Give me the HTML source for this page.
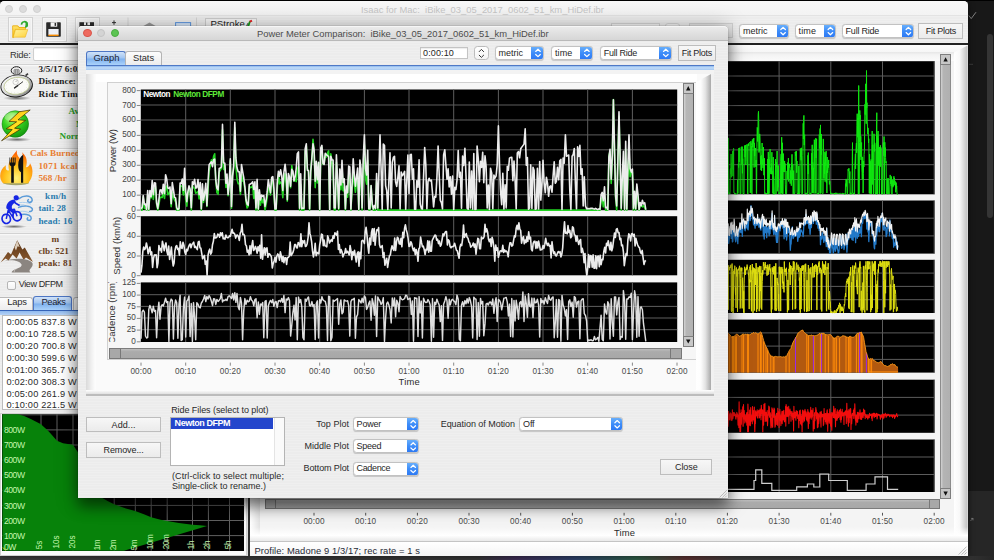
<!DOCTYPE html>
<html lang="en"><head><meta charset="utf-8"><title>Isaac for Mac</title>
<style>
*{box-sizing:border-box;margin:0;padding:0}
html,body{width:994px;height:560px;overflow:hidden}
body{position:relative;background:#1b1b1b;font-family:"Liberation Sans",sans-serif;font-size:9px;color:#222}
.a{position:absolute}
.t{position:absolute;white-space:pre;line-height:1;display:block}
svg{position:absolute;left:0;top:0;overflow:visible}
.pin{background-image:repeating-linear-gradient(180deg,rgba(255,255,255,.16) 0,rgba(255,255,255,.16) 1px,rgba(0,0,0,0) 1px,rgba(0,0,0,0) 2.64px)}
.sel{position:absolute;background:#fff;border:1px solid #c2c2c2;border-radius:3.6px;overflow:hidden;box-shadow:0 .5px .8px rgba(0,0,0,.16)}
.sel i{position:absolute;right:-1px;top:-1px;bottom:-1px;width:12px;background:linear-gradient(180deg,#6fb4fb 0,#3e8df9 50%,#2a76f3 100%);border-radius:0 3.6px 3.6px 0}
.btn{position:absolute;background:linear-gradient(180deg,#f7f7f7,#ebebeb);border:1px solid #bdbdbd}

</style></head>
<body>
<div class="a" style="left:967.00px;top:0.00px;width:27.00px;height:560.00px;background:#181818"></div>
<div class="a" style="left:967.00px;top:491.00px;width:27.00px;height:69.00px;background:#262626"></div>
<div class="a" style="left:987.00px;top:34.30px;width:6.00px;height:184.00px;background:#353535;border-radius:3px"></div>
<svg width="994" height="560"><path d="M968.8 15.5 L971.2 18.6 L976 12.2" fill="none" stroke="#8e8e8e" stroke-width="0.9"/><path d="M969 64.3 H973" stroke="#444" stroke-width="0.8"/><path d="M970.4 521 l2.6 -2.6 m0 0 h-2 m2 0 v2" stroke="#999" stroke-width="0.6" fill="none"/></svg>
<div class="a" style="left:0.00px;top:556.20px;width:994.00px;height:3.80px;background:linear-gradient(90deg,#3a3a3a 0,#343434 48%,#3c2c54 52%,#2c4068 58%,#2c5a44 64%,#5a3030 69%,#3a3a3a 74%,#343434 97%,#262626 100%)"></div>
<div class="a" style="left:0.00px;top:0.00px;width:994.00px;height:1.20px;background:#000"></div>
<div class="a" style="left:0.00px;top:1.00px;width:967.60px;height:555.20px;background:#ececec;border-radius:4.5px 4.5px 0 0;box-shadow:0 0 6px rgba(0,0,0,.6)"></div>
<div class="a" style="left:0.00px;top:1.00px;width:967.60px;height:14.80px;background:linear-gradient(180deg,#f8f8f8,#f3f3f3);border-radius:4.5px 4.5px 0 0;border-bottom:1px solid #e3e3e3"></div>
<div class="a" style="left:4.80px;top:4.70px;width:8.40px;height:8.40px;border-radius:50%;background:#dcdcdc;border:.6px solid #d0d0d0"></div>
<div class="a" style="left:18.60px;top:4.70px;width:8.40px;height:8.40px;border-radius:50%;background:#dcdcdc;border:.6px solid #d0d0d0"></div>
<div class="a" style="left:32.50px;top:4.70px;width:8.40px;height:8.40px;border-radius:50%;background:#dcdcdc;border:.6px solid #d0d0d0"></div>
<span class="t" style="left:361.00px;top:5.09px;font-size:9.4px;color:#c6c6c6;">Isaac for Mac:  iBike_03_05_2017_0602_51_km_HiDef.ibr</span>
<div class="a" style="left:0.00px;top:15.80px;width:967.60px;height:27.70px;background:#ececec"><div class="a pin" style="inset:0"></div></div>
<div class="a" style="left:7.60px;top:17.00px;width:25.00px;height:25.20px;border:1px solid #d2d2d2;background:linear-gradient(180deg,#f1f1f1,#e9e9e9);box-shadow:inset 0 0 0 1px #f6f6f6"></div>
<div class="a" style="left:41.50px;top:17.00px;width:25.00px;height:25.20px;border:1px solid #d2d2d2;background:linear-gradient(180deg,#f1f1f1,#e9e9e9);box-shadow:inset 0 0 0 1px #f6f6f6"></div>
<div class="a" style="left:74.60px;top:17.00px;width:25.00px;height:25.20px;border:1px solid #d2d2d2;background:linear-gradient(180deg,#f1f1f1,#e9e9e9);box-shadow:inset 0 0 0 1px #f6f6f6"></div>
<svg width="994" height="560">
<defs><linearGradient id="fg" x1="0" y1="0" x2="0" y2="1"><stop offset="0" stop-color="#ffe36a"/><stop offset="1" stop-color="#f4b400"/></linearGradient>
<linearGradient id="ff" x1="0" y1="0" x2="1" y2="1"><stop offset="0" stop-color="#fff3a0"/><stop offset="1" stop-color="#ffd23c"/></linearGradient></defs>
<path d="M12.6 25.6 h5.2 l1.4 1.5 h6.6 v3 h-13.2z" fill="#f2b100"/>
<path d="M12.6 26 v11.6 h1.2 l1.6 -8.2 h10 v-1.8 h-6.4 l-1.4 -1.6z" fill="url(#fg)" stroke="#e0a000" stroke-width=".5"/>
<path d="M15.6 29.6 h12.2 l-2.6 7.6 h-12z" fill="url(#ff)" stroke="#e8ac10" stroke-width=".5"/>
<path d="M21.6 24.6 a2.8 2.8 0 1 1 3.6 2.6" fill="none" stroke="#2fa82f" stroke-width="1.7"/>
<path d="M25.6 22.2 l2.2 0.4 -0.2 3.8 -2.2 -0.2z" fill="#2fa82f"/>
<!-- floppy -->
<rect x="46.2" y="22.3" width="14.6" height="14.4" rx=".8" fill="#2b2b2b"/>
<rect x="50.6" y="22.3" width="6.6" height="4.4" fill="#f4f4f4"/>
<rect x="54.6" y="22.9" width="1.5" height="3" fill="#2b2b2b"/>
<rect x="48.4" y="29" width="10.2" height="6" fill="#eef1f8"/>
<rect x="48.4" y="34.6" width="10.2" height="1.4" fill="#f58a00"/>
<!-- 3rd button icon top (mostly hidden) -->
<rect x="79.4" y="22.2" width="14.6" height="9" fill="#2b2b2b"/><rect x="84" y="22.2" width="6" height="3" fill="#f4f4f4"/><rect x="86" y="22.6" width="1.4" height="2.4" fill="#2b2b2b"/>
<path d="M114 20.4 v4.4 M112 22.6 h4" stroke="#333" stroke-width="1"/>
<path d="M128 17.5 v24" stroke="#d6d6d6" stroke-width="1"/>
<path d="M142.5 26.5 L149.5 22.6 L156.5 26.5z" fill="#9a9a9a"/>
<rect x="175.6" y="22.6" width="15" height="8" fill="#d8e8fb" stroke="#5b97e0" stroke-width="1"/>
<path d="M196.5 17.5 v24" stroke="#d6d6d6" stroke-width="1"/>
</svg>
<div class="a" style="left:204.60px;top:17.50px;width:52.80px;height:24.60px;border:1px solid #cdcdcd;background:linear-gradient(180deg,#f4f4f4,#e9e9e9)"></div>
<span class="t" style="left:210.40px;top:18.80px;font-size:9.6px;color:#222;letter-spacing:0.051px;">PStroke</span>
<svg width="994" height="560"><path d="M247 26.4 l2.2 -5.4 1.6 .6 -1.6 4.8z" fill="#18a018"/><path d="M249.2 20.8 l2.4 -1 .8 1.6 -2 1.2z" fill="#e02020"/><path d="M246.4 26.6 l1.4 -3.4" stroke="#222" stroke-width=".8"/></svg>
<div class="a" style="left:611.00px;top:23.20px;width:48.60px;height:15.00px;background:#f6f6f6;border:1px solid #d4d4d4"></div>
<div class="a" style="left:665.00px;top:23.20px;width:14.70px;height:15.00px;background:#f4f4f4;border:1px solid #d4d4d4;border-radius:3px"></div>
<div class="a" style="left:689.40px;top:23.20px;width:43.90px;height:15.00px;background:#e6e6e6;border:1px solid #d0d0d0"></div>
<div class="sel" style="left:739.30px;top:23.60px;width:49.80px;height:14.90px"><i style="width:12.60px"></i></div>
<svg width="994" height="560"><path d="M780.80 29.55 L783.10 27.35 L785.40 29.55 M780.80 32.55 L783.10 34.75 L785.40 32.55" fill="none" stroke="#fff" stroke-width="1.2" stroke-linecap="round" stroke-linejoin="round"/></svg>
<span class="t" style="left:742.90px;top:27.24px;font-size:9px;color:#262626;">metric</span>
<div class="sel" style="left:795.00px;top:23.60px;width:41.40px;height:14.90px"><i style="width:12.60px"></i></div>
<svg width="994" height="560"><path d="M828.10 29.55 L830.40 27.35 L832.70 29.55 M828.10 32.55 L830.40 34.75 L832.70 32.55" fill="none" stroke="#fff" stroke-width="1.2" stroke-linecap="round" stroke-linejoin="round"/></svg>
<span class="t" style="left:798.60px;top:27.24px;font-size:9px;color:#262626;letter-spacing:0.121px;">time</span>
<div class="sel" style="left:842.00px;top:23.60px;width:72.40px;height:14.90px"><i style="width:12.60px"></i></div>
<svg width="994" height="560"><path d="M906.10 29.55 L908.40 27.35 L910.70 29.55 M906.10 32.55 L908.40 34.75 L910.70 32.55" fill="none" stroke="#fff" stroke-width="1.2" stroke-linecap="round" stroke-linejoin="round"/></svg>
<span class="t" style="left:845.60px;top:27.24px;font-size:9px;color:#262626;letter-spacing:-0.235px;">Full Ride</span>
<div class="btn" style="left:918.30px;top:23.10px;width:45.20px;height:15.50px"></div>
<span class="t" style="left:925.65px;top:27.04px;font-size:9px;color:#262626;letter-spacing:-0.224px;">Fit Plots</span>
<div class="a" style="left:0.00px;top:43.40px;width:967.60px;height:2.00px;background:#232323"></div>
<div class="a" style="left:0.00px;top:45.40px;width:248.00px;height:510.80px;background:#ececec"><div class="a pin" style="inset:0"></div></div>
<span class="t" style="left:10.00px;top:49.59px;font-size:9.4px;color:#333;letter-spacing:-0.278px;">Ride:</span>
<div class="a" style="left:33.00px;top:47.00px;width:120.00px;height:13.60px;background:#fff;border:1px solid #cfcfcf;border-radius:2px;box-shadow:inset 0 1px 1px rgba(0,0,0,.08)"></div>
<div class="a" style="left:0.00px;top:63.60px;width:248.00px;height:1.00px;background:#d2d2d2"></div>
<div class="a" style="left:0.00px;top:64.60px;width:248.00px;height:1.00px;background:#f8f8f8"></div>
<div class="a" style="left:0.00px;top:105.40px;width:248.00px;height:1.00px;background:#d2d2d2"></div>
<div class="a" style="left:0.00px;top:106.40px;width:248.00px;height:1.00px;background:#f8f8f8"></div>
<div class="a" style="left:0.00px;top:147.50px;width:248.00px;height:1.00px;background:#d2d2d2"></div>
<div class="a" style="left:0.00px;top:148.50px;width:248.00px;height:1.00px;background:#f8f8f8"></div>
<div class="a" style="left:0.00px;top:188.80px;width:248.00px;height:1.00px;background:#d2d2d2"></div>
<div class="a" style="left:0.00px;top:189.80px;width:248.00px;height:1.00px;background:#f8f8f8"></div>
<div class="a" style="left:0.00px;top:232.50px;width:248.00px;height:1.00px;background:#d2d2d2"></div>
<div class="a" style="left:0.00px;top:233.50px;width:248.00px;height:1.00px;background:#f8f8f8"></div>
<div class="a" style="left:0.00px;top:274.20px;width:248.00px;height:1.00px;background:#d2d2d2"></div>
<div class="a" style="left:0.00px;top:275.20px;width:248.00px;height:1.00px;background:#f8f8f8"></div>
<span class="t" style="left:38.50px;top:64.79px;font-size:9.2px;color:#1c1c1c;font-family:'Liberation Serif', serif;font-weight:bold;letter-spacing:0.080px;">3/5/17 6:02</span>
<span class="t" style="left:38.50px;top:77.09px;font-size:9.2px;color:#1c1c1c;font-family:'Liberation Serif', serif;font-weight:bold;letter-spacing:0.083px;">Distance:</span>
<span class="t" style="left:38.50px;top:89.59px;font-size:9.2px;color:#1c1c1c;font-family:'Liberation Serif', serif;font-weight:bold;letter-spacing:0.369px;">Ride Time:</span>
<span class="t" style="left:68.50px;top:107.49px;font-size:9.2px;color:#2aa02a;font-family:'Liberation Serif', serif;font-weight:bold;">Avg</span>
<span class="t" style="left:76.00px;top:119.79px;font-size:9.2px;color:#2aa02a;font-family:'Liberation Serif', serif;font-weight:bold;">Max</span>
<span class="t" style="left:59.50px;top:132.09px;font-size:9.2px;color:#2aa02a;font-family:'Liberation Serif', serif;font-weight:bold;">Norm</span>
<span class="t" style="left:30.00px;top:149.39px;font-size:9.2px;color:#ea7f33;font-family:'Liberation Serif', serif;font-weight:bold;letter-spacing:0.065px;">Cals Burned</span>
<span class="t" style="left:38.40px;top:161.69px;font-size:9.2px;color:#ea7f33;font-family:'Liberation Serif', serif;font-weight:bold;letter-spacing:0.276px;">1071 kcal</span>
<span class="t" style="left:38.40px;top:174.09px;font-size:9.2px;color:#ea7f33;font-family:'Liberation Serif', serif;font-weight:bold;letter-spacing:0.096px;">568 /hr</span>
<span class="t" style="left:45.00px;top:191.89px;font-size:9.2px;color:#2b7db0;font-family:'Liberation Serif', serif;font-weight:bold;letter-spacing:0.266px;">km/h</span>
<span class="t" style="left:38.40px;top:204.19px;font-size:9.2px;color:#2b7db0;font-family:'Liberation Serif', serif;font-weight:bold;letter-spacing:0.023px;">tail: 28</span>
<span class="t" style="left:38.40px;top:216.69px;font-size:9.2px;color:#2b7db0;font-family:'Liberation Serif', serif;font-weight:bold;letter-spacing:0.070px;">head: 16</span>
<span class="t" style="left:51.60px;top:234.89px;font-size:9.2px;color:#6a3f1d;font-family:'Liberation Serif', serif;font-weight:bold;">m</span>
<span class="t" style="left:38.40px;top:246.89px;font-size:9.2px;color:#6a3f1d;font-family:'Liberation Serif', serif;font-weight:bold;letter-spacing:-0.049px;">clb: 521</span>
<span class="t" style="left:38.40px;top:259.29px;font-size:9.2px;color:#6a3f1d;font-family:'Liberation Serif', serif;font-weight:bold;letter-spacing:0.070px;">peak: 81</span>
<svg width="994" height="560">
<defs>
<radialGradient id="sw" cx=".45" cy=".4" r=".7"><stop offset="0" stop-color="#ffffff"/><stop offset=".75" stop-color="#f1f1ea"/><stop offset="1" stop-color="#c9c9c0"/></radialGradient>
<linearGradient id="swr" x1="0" y1="0" x2="1" y2="1"><stop offset="0" stop-color="#ffffff"/><stop offset=".45" stop-color="#d8d8d8"/><stop offset=".8" stop-color="#9a9a9a"/><stop offset="1" stop-color="#5c5c5c"/></linearGradient>
<radialGradient id="gb" cx=".4" cy=".3" r=".8"><stop offset="0" stop-color="#b6ff7a"/><stop offset=".45" stop-color="#35d01f"/><stop offset="1" stop-color="#0c8a0c"/></radialGradient>
<linearGradient id="bolt" x1="0" y1="0" x2="1" y2="1"><stop offset="0" stop-color="#ff9a00"/><stop offset=".5" stop-color="#ffe020"/><stop offset="1" stop-color="#ffb400"/></linearGradient>
<radialGradient id="fire" cx=".5" cy=".85" r=".8"><stop offset="0" stop-color="#fff27a"/><stop offset=".45" stop-color="#ffc21a"/><stop offset="1" stop-color="#ff5a00"/></radialGradient>
<linearGradient id="mtn" x1="0" y1="0" x2="0" y2="1"><stop offset="0" stop-color="#5a3416"/><stop offset="1" stop-color="#8a5a30"/></linearGradient>
<radialGradient id="shd" cx=".5" cy=".5" r=".5"><stop offset="0" stop-color="#000" stop-opacity=".55"/><stop offset="1" stop-color="#000" stop-opacity="0"/></radialGradient>
</defs>
<!-- stopwatch -->
<ellipse cx="17" cy="98.2" rx="14" ry="2.2" fill="url(#shd)"/>
<ellipse cx="16.5" cy="70.6" rx="5.3" ry="3.9" fill="none" stroke="#1e1e1e" stroke-width="1"/>
<rect x="14" y="69.4" width="5.2" height="5.6" rx="1" fill="#bdbdbd" stroke="#555" stroke-width=".5"/>
<path d="M15.6 69.8 v4.6 M17.6 69.8 v4.6" stroke="#6e6e6e" stroke-width=".6"/>
<path d="M25.6 75.6 l2.4 -2.0" stroke="#3a3a3a" stroke-width="1.8"/>
<g transform="rotate(-8 16.7 86)">
<ellipse cx="16.700" cy="86" rx="16.300" ry="11.300" fill="#1a1a1a"/>
<ellipse cx="16.700" cy="85.800" rx="15.400" ry="10.500" fill="url(#swr)"/>
<ellipse cx="16.700" cy="85.800" rx="12.800" ry="8.500" fill="#fbfbf8" stroke="#b9c48c" stroke-width=".8"/>
<ellipse cx="16.700" cy="85.800" rx="10.600" ry="6.900" fill="none" stroke="#c9c9c9" stroke-width=".6" stroke-dasharray=".5 2.8"/>
</g>
<circle cx="15.6" cy="82" r="2.7" fill="none" stroke="#9a9a9a" stroke-width=".45"/>
<path d="M15.6 82 l1.4 -1.6" stroke="#666" stroke-width=".5"/>
<path d="M14.2 88.2 L23 81.6" stroke="#2a2a2a" stroke-width=".9"/><path d="M14.2 88.2 L18 85.4" stroke="#2a2a2a" stroke-width="1.4"/>
<!-- lightning -->
<ellipse cx="17" cy="139.6" rx="14" ry="2.2" fill="url(#shd)"/>
<circle cx="15.3" cy="124" r="13.3" fill="url(#gb)" stroke="#0a7a0a" stroke-width=".5"/>
<ellipse cx="13" cy="117" rx="8.6" ry="4.6" fill="#fff" opacity=".28"/>
<path d="M30.2 110 L19.2 111.8 L9 121.4 L16.6 121.8 L6.2 128.8 L12.2 129.6 L1.6 140.8 L20.6 129.2 L14.6 128.2 L25.6 120.4 L18 119.8z" fill="url(#bolt)" stroke="#3a2a00" stroke-width=".7" stroke-linejoin="round"/>
<!-- fire with cutlery -->
<g transform="translate(0,-2.8)">
<ellipse cx="16" cy="185.6" rx="13" ry="2.4" fill="#6a6a00" opacity=".55"/>
<path d="M3 186 C-2 180 0 172 6 168 C5 172 7 174 9 173 C7 166 11 160 17 153 C16 158 19 160 21 163 C23 160 23 157 22 155 C28 160 27 166 26 170 C28 170 30 168 30 166 C34 172 33 181 28 186z" fill="url(#fire)"/>
<path d="M9.4 160.4 v5.6 c0 1.8 .8 2.6 1.800 3 v16.600 h2.600 v-16.600 c1 -.4 1.800 -1.200 1.800 -3 v-5.600 h-1 v4.800 h-.9 v-4.800 h-1 v4.800 h-.9 v-4.800 h-1 v4.800 h-.9 v-4.800z" fill="#111"/>
<path d="M21.000 185.600 v-10.600 c-2 -1 -2.800 -3.600 -2.800 -7 c0 -4.600 1.800 -8.400 5 -10.400 v28z" fill="#111"/>
</g>
<!-- cyclist -->
<ellipse cx="14" cy="226.6" rx="13" ry="1.8" fill="url(#shd)"/>
<g fill="none" stroke="#5b9bd8" stroke-width="1.5" stroke-linecap="round">
<path d="M19 198.600 c5 -3.600 11.600 -3.200 13 .4 c.8 2.200 -1 3.800 -3.200 3.200 c-1.400 -.4 -1.600 -2 -.4 -2.600"/>
<path d="M18.600 207.400 c5.600 -2.200 12 -1.600 13.600 1.200 c.8 1.800 -.8 3.200 -2.600 2.800"/>
<path d="M20 215 c4.600 -1.400 9.600 -.4 11 2.200 c.8 2 -.8 3.600 -2.800 3 c-1.200 -.4 -1.400 -1.800 -.4 -2.400"/>
<path d="M19.600 202.600 c4 -.6 8 -.2 11 1.400 M20 211.400 c3.600 -.4 6.600 0 9 1.400 M18 205 h6" stroke="#a9cdee" stroke-width="1"/></g>
<g transform="translate(0,-1.6) rotate(-14 10 214)">
<g fill="none" stroke="#1626e4" stroke-width="1.700"><ellipse cx="4.800" cy="219.400" rx="4.200" ry="4.600"/><ellipse cx="16" cy="219.400" rx="4.200" ry="4.600"/></g>
<path d="M4.800 219.400 L8.800 211.400 L15 212 L16 219.400 M8.800 211.400 L11.400 219 L15 212" fill="none" stroke="#1626e4" stroke-width="1.500" stroke-linejoin="round"/>
<path d="M7.400 209 C8.600 204 13 201.600 17.400 202.600 L18.400 205.800 C15 205.800 13 207.400 12.800 210.600 L15 214.800 L12.400 215.600 L9 211.400z" fill="#1626e4"/>
<circle cx="19.600" cy="201.400" r="2.600" fill="#1626e4"/><path d="M17 205.800 L21 209.600" stroke="#1626e4" stroke-width="1.600"/>
</g>
<!-- mountain -->
<path d="M0.600 262.600 L8 252 L11 254.600 L17.200 240.200 L22.400 249.600 L24.800 247.600 L33 262 L26 257.600 L23.600 259.800 L19.600 252.600 L16.600 258.600 L12.600 254.600 L8.600 260.600 L5.600 258.600z" fill="url(#mtn)"/>
<path d="M17.200 240.200 L19.600 247 L17.600 246.200 L16 250.600 L14.600 247.800z" fill="#f1e6d6" opacity=".85"/>
<path d="M2.600 262 C10 258.600 20 260.600 21.600 264.600 C22.600 268.600 12 268.600 11.600 272.600 L30.600 272.600 C27 270 33.600 267.600 32.600 263.600 C31 258.600 14 256.600 2.600 262z" fill="#8b8580"/>
<path d="M6.600 262.600 C13 260.600 19.600 262 20 264.800 C20.600 268 12.600 269 14.600 272.400" fill="none" stroke="#e8e4e0" stroke-width=".7" stroke-dasharray="1.600 1.200"/>
</svg>
<div class="a" style="left:7.20px;top:281.20px;width:9.20px;height:8.80px;background:linear-gradient(180deg,#fff,#f3f3f3);border:1px solid #b5b5b5;border-radius:2px"></div>
<span class="t" style="left:18.80px;top:280.19px;font-size:9px;color:#2a2a2a;letter-spacing:-0.394px;">View DFPM</span>
<div class="a" style="left:-2.00px;top:296.60px;width:34.60px;height:13.00px;background:linear-gradient(180deg,#fdfdfd,#ececec);border:1px solid #b9b9b9;border-bottom:none;border-radius:0 3px 0 0"></div>
<div class="a" style="left:33.20px;top:296.40px;width:39.00px;height:13.40px;background:linear-gradient(180deg,#d0e2f8 0,#a2c6f2 46%,#80b2ee 54%,#aad2fb 100%);border:1px solid #4d76c4;border-bottom:none;border-radius:3px 3px 0 0"></div>
<div class="a" style="left:73.40px;top:296.60px;width:40.00px;height:13.00px;background:linear-gradient(180deg,#fdfdfd,#ececec);border:1px solid #b9b9b9;border-bottom:none;border-radius:3px 3px 0 0"></div>
<span class="t" style="left:7.20px;top:297.19px;font-size:9.4px;color:#2b2b2b;letter-spacing:-0.211px;">Laps</span>
<span class="t" style="left:41.50px;top:297.19px;font-size:9.4px;color:#1c2333;letter-spacing:-0.412px;">Peaks</span>
<div class="a" style="left:0.00px;top:309.80px;width:248.00px;height:1.20px;background:#3563b8"></div>
<div class="a" style="left:0.00px;top:311.00px;width:248.00px;height:3.80px;background:linear-gradient(180deg,#8fb9ee,#b6d3f6)"></div>
<div class="a" style="left:1.60px;top:315.20px;width:246.00px;height:94.60px;background:#fff;border:1px solid #bcbcbc"></div>
<span class="t" style="left:6.40px;top:318.39px;font-size:9.2px;color:#2a2a2a;letter-spacing:0.205px;">0:00:05 837.8 W</span>
<span class="t" style="left:6.40px;top:330.25px;font-size:9.2px;color:#2a2a2a;letter-spacing:0.205px;">0:00:10 728.5 W</span>
<span class="t" style="left:6.40px;top:342.11px;font-size:9.2px;color:#2a2a2a;letter-spacing:0.205px;">0:00:20 700.8 W</span>
<span class="t" style="left:6.40px;top:353.97px;font-size:9.2px;color:#2a2a2a;letter-spacing:0.205px;">0:00:30 599.6 W</span>
<span class="t" style="left:6.40px;top:365.83px;font-size:9.2px;color:#2a2a2a;letter-spacing:0.205px;">0:01:00 365.7 W</span>
<span class="t" style="left:6.40px;top:377.69px;font-size:9.2px;color:#2a2a2a;letter-spacing:0.205px;">0:02:00 308.3 W</span>
<span class="t" style="left:6.40px;top:389.55px;font-size:9.2px;color:#2a2a2a;letter-spacing:0.205px;">0:05:00 261.9 W</span>
<span class="t" style="left:6.40px;top:401.41px;font-size:9.2px;color:#2a2a2a;letter-spacing:0.205px;">0:10:00 221.5 W</span>
<div class="a" style="left:0.40px;top:412.60px;width:246.60px;height:143.40px;background:#fafafa;border:1px solid #d0d0d0"></div>
<div class="a" style="left:2.40px;top:414.20px;width:241.80px;height:136.50px;background:#000"></div>
<svg width="994" height="560"><path d="M2.4 535.6 H244.2 M2.4 520.5 H244.2 M2.4 505.4 H244.2 M2.4 490.3 H244.2 M2.4 475.2 H244.2 M2.4 460.1 H244.2 M2.4 445.0 H244.2 M2.4 429.9 H244.2 M2.4 414.8 H244.2 M41.0 414.2 V550.7 M57.0 414.2 V550.7 M73.0 414.2 V550.7 M98.2 414.2 V550.7 M114.2 414.2 V550.7 M135.3 414.2 V550.7 M151.2 414.2 V550.7 M167.2 414.2 V550.7 M192.5 414.2 V550.7 M208.4 414.2 V550.7 M229.5 414.2 V550.7" stroke="#606060" stroke-width="1" fill="none"/><path d="M2.4 414.2 L18.2 414.2 L24.2 415.9 L30.8 419.0 L41.0 424.2 L48.8 431.4 L57.0 440.8 L63.0 443.2 L73.0 444.8 L78.1 452.6 L82.3 460.1 L88.9 478.2 L98.2 495.4 L107.6 500.9 L114.2 504.2 L126.0 508.4 L135.3 511.1 L144.6 514.5 L151.2 517.3 L160.6 519.7 L167.2 521.1 L179.0 522.9 L192.5 524.7 L200.0 525.3 L207.1 525.9 L124 550.7 L2.4 550.7z" fill="#07820a"/><path d="M3 547.5 l2.6 3" stroke="#e6d800" stroke-width="1"/></svg>
<span class="t" style="left:3.90px;top:531.79px;font-size:8.6px;color:#c4f6ae;letter-spacing:-0.413px;">100W</span>
<span class="t" style="left:3.90px;top:516.69px;font-size:8.6px;color:#c4f6ae;letter-spacing:-0.413px;">200W</span>
<span class="t" style="left:3.90px;top:501.59px;font-size:8.6px;color:#c4f6ae;letter-spacing:-0.413px;">300W</span>
<span class="t" style="left:3.90px;top:486.49px;font-size:8.6px;color:#c4f6ae;letter-spacing:-0.413px;">400W</span>
<span class="t" style="left:3.90px;top:471.39px;font-size:8.6px;color:#c4f6ae;letter-spacing:-0.413px;">500W</span>
<span class="t" style="left:3.90px;top:456.29px;font-size:8.6px;color:#c4f6ae;letter-spacing:-0.413px;">600W</span>
<span class="t" style="left:3.90px;top:441.19px;font-size:8.6px;color:#c4f6ae;letter-spacing:-0.413px;">700W</span>
<span class="t" style="left:3.90px;top:426.09px;font-size:8.6px;color:#c4f6ae;letter-spacing:-0.413px;">800W</span>
<span class="t" style="left:3.90px;top:542.59px;font-size:8.6px;color:#c4f6ae;letter-spacing:-0.450px;">0W</span>
<span class="t" style="left:36.35px;top:540.68px;font-size:8.2px;color:#c4f6ae;width:8.60px;transform:rotate(-90deg);transform-origin:50% 49%;letter-spacing:-0.028px;">5s</span>
<span class="t" style="left:50.00px;top:538.38px;font-size:8.2px;color:#c4f6ae;width:13.20px;transform:rotate(-90deg);transform-origin:50% 49%;">10s</span>
<span class="t" style="left:65.95px;top:538.38px;font-size:8.2px;color:#c4f6ae;width:13.20px;transform:rotate(-90deg);transform-origin:50% 49%;">20s</span>
<span class="t" style="left:92.60px;top:540.68px;font-size:8.2px;color:#c4f6ae;width:10.47px;transform:rotate(-90deg);transform-origin:50% 49%;letter-spacing:-0.450px;">1m</span>
<span class="t" style="left:108.56px;top:540.68px;font-size:8.2px;color:#c4f6ae;width:10.47px;transform:rotate(-90deg);transform-origin:50% 49%;letter-spacing:-0.450px;">2m</span>
<span class="t" style="left:129.65px;top:540.68px;font-size:8.2px;color:#c4f6ae;width:10.47px;transform:rotate(-90deg);transform-origin:50% 49%;letter-spacing:-0.450px;">5m</span>
<span class="t" style="left:143.55px;top:538.38px;font-size:8.2px;color:#c4f6ae;width:14.59px;transform:rotate(-90deg);transform-origin:50% 49%;letter-spacing:-0.450px;">10m</span>
<span class="t" style="left:159.50px;top:538.38px;font-size:8.2px;color:#c4f6ae;width:14.59px;transform:rotate(-90deg);transform-origin:50% 49%;letter-spacing:-0.450px;">20m</span>
<span class="t" style="left:187.78px;top:540.68px;font-size:8.2px;color:#c4f6ae;width:8.60px;transform:rotate(-90deg);transform-origin:50% 49%;letter-spacing:-0.255px;">1h</span>
<span class="t" style="left:203.74px;top:540.68px;font-size:8.2px;color:#c4f6ae;width:8.60px;transform:rotate(-90deg);transform-origin:50% 49%;letter-spacing:-0.255px;">2h</span>
<span class="t" style="left:224.83px;top:540.68px;font-size:8.2px;color:#c4f6ae;width:8.60px;transform:rotate(-90deg);transform-origin:50% 49%;letter-spacing:-0.255px;">5h</span>
<div class="a" style="left:246.60px;top:45.40px;width:1.60px;height:510.80px;background:#dcdcdc"></div>
<div class="a" style="left:248.20px;top:45.40px;width:2.10px;height:510.80px;background:#2f2f2f"></div>
<div class="a" style="left:250.40px;top:45.40px;width:717.20px;height:495.60px;background:#f4f4f4"></div>
<div class="a" style="left:250.40px;top:45.40px;width:717.20px;height:7.00px;background:linear-gradient(180deg,#fdfdfd,#f6f6f6)"></div>
<div class="a" style="left:250.40px;top:45.40px;width:10.00px;height:495.60px;background:linear-gradient(90deg,#ffffff 0,#e2e2e2 100%)"></div>
<div class="a" style="left:954.00px;top:45.40px;width:13.60px;height:495.60px;background:linear-gradient(90deg,#ffffff 0,#f8f8f8 40%,#bcbcbc 100%);clip-path:polygon(0 7px,100% 0,100% 100%,0 100%)"></div>
<div class="a" style="left:260.40px;top:52.20px;width:693.60px;height:9.00px;background:linear-gradient(180deg,#e6e6e6 0,#f3f3f3 30%,#fbfbfb 100%)"></div>
<div class="a" style="left:250.40px;top:527.00px;width:717.20px;height:14.00px;background:linear-gradient(180deg,rgba(255,255,255,0),#fff 60%,#e9e9e9 100%)"></div>
<svg width="994" height="560"><rect x="264.6" y="61.2" width="670.0" height="133.1" fill="#000"/><rect x="264.6" y="200.5" width="670.0" height="53.1" fill="#000"/><rect x="264.6" y="259.8" width="670.0" height="53.2" fill="#000"/><rect x="264.6" y="319.6" width="670.0" height="53.0" fill="#000"/><rect x="264.6" y="379.7" width="670.0" height="53.1" fill="#000"/><rect x="264.6" y="439.5" width="670.0" height="52.5" fill="#000"/><path d="M264.6 76.0 H934.6 M264.6 90.8 H934.6 M264.6 105.6 H934.6 M264.6 120.4 H934.6 M264.6 135.1 H934.6 M264.6 149.9 H934.6 M264.6 164.7 H934.6 M264.6 179.5 H934.6 M314.0 61.2 V194.3 M365.7 61.2 V194.3 M417.4 61.2 V194.3 M469.0 61.2 V194.3 M520.7 61.2 V194.3 M572.4 61.2 V194.3 M624.1 61.2 V194.3 M675.8 61.2 V194.3 M727.4 61.2 V194.3 M779.1 61.2 V194.3 M830.8 61.2 V194.3 M882.5 61.2 V194.3 M934.2 61.2 V194.3 M264.6 218.2 H934.6 M264.6 235.9 H934.6 M314.0 200.5 V253.6 M365.7 200.5 V253.6 M417.4 200.5 V253.6 M469.0 200.5 V253.6 M520.7 200.5 V253.6 M572.4 200.5 V253.6 M624.1 200.5 V253.6 M675.8 200.5 V253.6 M727.4 200.5 V253.6 M779.1 200.5 V253.6 M830.8 200.5 V253.6 M882.5 200.5 V253.6 M934.2 200.5 V253.6 M264.6 273.1 H934.6 M264.6 286.4 H934.6 M264.6 299.7 H934.6 M314.0 259.8 V313.0 M365.7 259.8 V313.0 M417.4 259.8 V313.0 M469.0 259.8 V313.0 M520.7 259.8 V313.0 M572.4 259.8 V313.0 M624.1 259.8 V313.0 M675.8 259.8 V313.0 M727.4 259.8 V313.0 M779.1 259.8 V313.0 M830.8 259.8 V313.0 M882.5 259.8 V313.0 M934.2 259.8 V313.0 M264.6 332.9 H934.6 M264.6 346.1 H934.6 M264.6 359.4 H934.6 M314.0 319.6 V372.6 M365.7 319.6 V372.6 M417.4 319.6 V372.6 M469.0 319.6 V372.6 M520.7 319.6 V372.6 M572.4 319.6 V372.6 M624.1 319.6 V372.6 M675.8 319.6 V372.6 M727.4 319.6 V372.6 M779.1 319.6 V372.6 M830.8 319.6 V372.6 M882.5 319.6 V372.6 M934.2 319.6 V372.6 M264.6 397.4 H934.6 M264.6 415.1 H934.6 M314.0 379.7 V432.8 M365.7 379.7 V432.8 M417.4 379.7 V432.8 M469.0 379.7 V432.8 M520.7 379.7 V432.8 M572.4 379.7 V432.8 M624.1 379.7 V432.8 M675.8 379.7 V432.8 M727.4 379.7 V432.8 M779.1 379.7 V432.8 M830.8 379.7 V432.8 M882.5 379.7 V432.8 M934.2 379.7 V432.8 M264.6 457.0 H934.6 M264.6 474.5 H934.6 M314.0 439.5 V492.0 M365.7 439.5 V492.0 M417.4 439.5 V492.0 M469.0 439.5 V492.0 M520.7 439.5 V492.0 M572.4 439.5 V492.0 M624.1 439.5 V492.0 M675.8 439.5 V492.0 M727.4 439.5 V492.0 M779.1 439.5 V492.0 M830.8 439.5 V492.0 M882.5 439.5 V492.0 M934.2 439.5 V492.0" stroke="#5c5c5c" stroke-width="1" fill="none"/><polyline points="686.1,143.9 686.4,137.7 686.6,173.2 686.9,150.1 687.1,131.2 687.4,131.1 687.7,137.3 687.9,145.8 688.2,169.8 688.4,143.3 688.7,158.1 688.9,157.2 689.2,144.0 689.5,161.6 689.7,153.0 690.0,132.6 690.2,135.0 690.5,152.9 690.8,147.1 691.0,142.5 691.3,123.5 691.5,193.8 691.8,192.8 692.0,144.8 692.3,139.1 692.6,144.8 692.8,141.9 693.1,193.3 693.3,192.9 693.6,194.1 693.9,193.2 694.1,194.3 694.4,163.1 694.6,144.1 694.9,135.5 695.1,139.9 695.4,158.2 695.7,149.6 695.9,156.9 696.2,147.4 696.4,136.4 696.7,194.2 697.0,145.2 697.2,146.2 697.5,141.8 697.7,138.4 698.0,163.8 698.2,145.4 698.5,164.1 698.8,135.7 699.0,155.0 699.3,135.6 699.5,193.6 699.8,194.3 700.1,193.7 700.3,194.3 700.6,145.5 700.8,147.8 701.1,144.9 701.3,134.9 701.6,134.9 701.9,134.8 702.1,146.9 702.4,150.3 702.6,167.0 702.9,171.2 703.2,148.7 703.4,160.0 703.7,193.8 703.9,193.8 704.2,192.7 704.4,193.5 704.7,194.0 705.0,193.2 705.2,192.7 705.5,193.6 705.7,193.7 706.0,194.0 706.3,141.9 706.5,143.3 706.8,129.0 707.0,141.5 707.3,143.6 707.6,140.6 707.8,143.7 708.1,149.6 708.3,148.1 708.6,171.2 708.8,155.5 709.1,170.2 709.4,162.6 709.6,165.4 709.9,154.4 710.1,167.6 710.4,138.8 710.7,159.1 710.9,166.7 711.2,137.9 711.4,193.0 711.7,176.6 711.9,155.5 712.2,146.2 712.5,139.2 712.7,140.9 713.0,192.7 713.2,194.1 713.5,149.7 713.8,192.8 714.0,192.9 714.3,193.2 714.5,193.1 714.8,192.9 715.0,193.3 715.3,193.2 715.6,194.1 715.8,192.8 716.1,154.2 716.3,166.7 716.6,162.4 716.9,169.9 717.1,154.2 717.4,145.9 717.6,157.9 717.9,175.5 718.1,167.3 718.4,156.4 718.7,154.2 718.9,154.9 719.2,162.9 719.4,192.7 719.7,193.4 720.0,193.3 720.2,152.3 720.5,173.8 720.7,145.9 721.0,162.2 721.2,161.8 721.5,171.1 721.8,174.8 722.0,161.7 722.3,173.0 722.5,163.7 722.8,159.2 723.1,147.3 723.3,182.4 723.6,151.5 723.8,149.1 724.1,176.2 724.3,169.5 724.6,193.8 724.9,167.0 725.1,149.4 725.4,164.3 725.6,143.3 725.9,138.9 726.2,159.1 726.4,193.3 726.7,132.9 726.9,193.9 727.2,194.2 727.4,112.7 727.7,193.0 728.0,193.4 728.2,137.9 728.5,193.7 728.7,194.2 729.0,192.9 729.3,192.8 729.5,192.8 729.8,194.0 730.0,192.7 730.3,169.3 730.5,168.4 730.8,174.2 731.1,154.0 731.3,177.3 731.6,163.2 731.8,169.2 732.1,161.5 732.4,155.2 732.6,150.9 732.9,176.2 733.1,156.4 733.4,169.7 733.6,148.3 733.9,192.9 734.2,193.1 734.4,193.1 734.7,194.1 734.9,192.8 735.2,193.3 735.5,193.7 735.7,193.3 736.0,194.2 736.2,194.0 736.5,193.9 736.8,194.2 737.0,194.1 737.3,193.8 737.5,180.2 737.8,193.6 738.0,193.1 738.3,163.8 738.6,167.5 738.8,148.1 739.1,162.1 739.3,150.0 739.6,147.8 739.9,162.3 740.1,193.7 740.4,193.2 740.6,193.8 740.9,193.4 741.1,147.1 741.4,147.0 741.7,146.9 741.9,164.7 742.2,146.6 742.4,173.3 742.7,158.7 743.0,192.8 743.2,194.1 743.5,194.1 743.7,193.2 744.0,193.5 744.2,153.8 744.5,145.6 744.8,145.5 745.0,157.1 745.3,151.8 745.5,145.2 745.8,164.9 746.1,161.5 746.3,144.8 746.6,144.7 746.8,144.6 747.1,144.5 747.3,144.4 747.6,192.9 747.9,194.0 748.1,144.0 748.4,143.7 748.6,146.0 748.9,143.2 749.2,142.9 749.4,142.7 749.7,142.4 749.9,142.1 750.2,193.0 750.4,192.8 750.7,141.4 751.0,141.1 751.2,142.3 751.5,145.4 751.7,192.8 752.0,193.9 752.3,139.7 752.5,140.9 752.8,147.3 753.0,138.9 753.3,138.7 753.5,143.4 753.8,138.1 754.1,167.5 754.3,142.8 754.6,156.1 754.8,149.8 755.1,150.5 755.4,150.1 755.6,148.0 755.9,166.9 756.1,160.0 756.4,193.0 756.6,193.6 756.9,146.9 757.2,127.4 757.4,128.0 757.7,141.5 757.9,135.2 758.2,114.3 758.5,111.3 758.7,118.2 759.0,152.5 759.2,134.5 759.5,151.1 759.7,133.9 760.0,140.2 760.3,155.2 760.5,164.2 760.8,156.3 761.0,170.1 761.3,155.2 761.6,170.9 761.8,167.4 762.1,143.0 762.3,164.9 762.6,159.5 762.8,165.3 763.1,168.0 763.4,147.1 763.6,157.9 763.9,175.2 764.1,164.2 764.4,158.2 764.7,193.6 764.9,193.7 765.2,194.0 765.4,192.7 765.7,193.3 766.0,194.0 766.2,193.1 766.5,193.7 766.7,193.7 767.0,193.0 767.2,193.0 767.5,194.2 767.8,159.0 768.0,193.3 768.3,151.9 768.5,193.9 768.8,193.8 769.1,193.9 769.3,193.3 769.6,158.8 769.8,156.2 770.1,149.0 770.3,166.9 770.6,172.8 770.9,174.1 771.1,167.7 771.4,174.2 771.6,162.4 771.9,152.2 772.2,174.0 772.4,171.3 772.7,171.4 772.9,193.4 773.2,157.1 773.4,194.3 773.7,194.0 774.0,193.5 774.2,193.3 774.5,194.2 774.7,193.5 775.0,179.8 775.3,175.5 775.5,159.1 775.8,166.6 776.0,193.9 776.3,162.2 776.5,167.0 776.8,167.1 777.1,151.0 777.3,191.3 777.6,173.3 777.8,165.7 778.1,187.3 778.4,165.5 778.6,176.7 778.9,193.9 779.1,192.8 779.4,192.7 779.6,193.3 779.9,193.2 780.2,194.0 780.4,193.4 780.7,161.2 780.9,156.2 781.2,153.9 781.5,192.8 781.7,137.2 782.0,194.2 782.2,193.6 782.5,142.8 782.7,194.0 783.0,193.9 783.3,153.5 783.5,172.0 783.8,168.7 784.0,163.6 784.3,168.8 784.6,160.9 784.8,172.1 785.1,163.5 785.3,184.1 785.6,193.9 785.8,194.0 786.1,193.4 786.4,193.9 786.6,193.1 786.9,172.7 787.1,170.9 787.4,179.1 787.7,162.5 787.9,170.5 788.2,170.9 788.4,158.1 788.7,181.5 788.9,166.8 789.2,167.6 789.5,163.8 789.7,166.7 790.0,167.3 790.2,183.6 790.5,170.5 790.8,178.2 791.0,172.1 791.3,185.7 791.5,163.0 791.8,164.2 792.0,154.3 792.3,180.1 792.6,172.3 792.8,164.2 793.1,193.9 793.3,193.3 793.6,170.6 793.9,193.3 794.1,192.8 794.4,193.9 794.6,193.6 794.9,193.1 795.2,152.0 795.4,153.7 795.7,155.7 795.9,151.4 796.2,160.9 796.4,151.1 796.7,172.7 797.0,161.0 797.2,193.2 797.5,194.1 797.7,193.2 798.0,194.0 798.3,193.3 798.5,193.8 798.8,165.8 799.0,193.4 799.3,194.0 799.5,193.2 799.8,193.0 800.1,162.0 800.3,148.4 800.6,157.2 800.8,157.5 801.1,160.3 801.4,154.9 801.6,147.8 801.9,193.8 802.1,194.2 802.4,193.1 802.6,192.9 802.9,155.4 803.2,123.3 803.4,139.0 803.7,120.8 803.9,115.4 804.2,145.1 804.5,137.1 804.7,134.7 805.0,193.6 805.2,193.9 805.5,192.9 805.7,193.6 806.0,193.6 806.3,194.2 806.5,193.4 806.8,192.8 807.0,194.2 807.3,193.8 807.6,193.2 807.8,155.3 808.1,174.0 808.3,152.5 808.6,163.0 808.8,167.0 809.1,193.1 809.4,194.1 809.6,194.3 809.9,193.9 810.1,194.0 810.4,194.0 810.7,192.9 810.9,193.0 811.2,193.5 811.4,164.8 811.7,153.1 811.9,169.5 812.2,144.8 812.5,192.8 812.7,162.3 813.0,169.4 813.2,193.3 813.5,167.9 813.8,168.7 814.0,151.4 814.3,139.7 814.5,141.2 814.8,193.4 815.0,193.0 815.3,193.0 815.6,193.2 815.8,138.1 816.1,158.0 816.3,148.6 816.6,138.9 816.9,193.4 817.1,193.0 817.4,193.5 817.6,193.8 817.9,194.0 818.1,194.1 818.4,192.9 818.7,193.9 818.9,192.9 819.2,134.7 819.4,135.3 819.7,148.4 820.0,128.5 820.2,193.3 820.5,124.9 820.7,193.5 821.0,148.7 821.2,154.8 821.5,134.0 821.8,149.3 822.0,192.9 822.3,193.2 822.5,193.9 822.8,193.9 823.1,193.1 823.3,138.9 823.6,150.5 823.8,178.1 824.1,178.4 824.3,162.6 824.6,174.0 824.9,151.8 825.1,181.7 825.4,152.9 825.6,165.6 825.9,154.1 826.2,151.1 826.4,183.1 826.7,170.6 826.9,193.0 827.2,157.0 827.5,172.9 827.7,166.6 828.0,163.8 828.2,167.7 828.5,164.2 828.7,159.9 829.0,170.5 829.3,184.4 829.5,184.2 829.8,181.2 830.0,183.3 830.3,190.6 830.6,191.8 830.8,194.1 831.1,193.2 831.3,193.5 831.6,193.6 831.8,193.3 832.1,193.3 832.4,193.2 832.6,193.7 832.9,193.4 833.1,193.6 833.4,193.4 833.7,193.7 833.9,193.9 834.2,193.7 834.4,193.1 834.7,194.2 834.9,194.2 835.2,193.1 835.5,192.8 835.7,193.1 836.0,194.1 836.2,192.8 836.5,193.1 836.8,193.8 837.0,193.6 837.3,193.5 837.5,193.4 837.8,193.4 838.0,193.5 838.3,193.2 838.6,193.3 838.8,193.6 839.1,193.3 839.3,193.3 839.6,193.8 839.9,193.7 840.1,193.4 840.4,193.5 840.6,193.2 840.9,193.3 841.1,193.6 841.4,193.3 841.7,193.6 841.9,193.4 842.2,193.2 842.4,193.3 842.7,194.0 843.0,193.3 843.2,193.7 843.5,193.7 843.7,193.2 844.0,193.6 844.2,194.0 844.5,194.3 844.8,193.9 845.0,193.8 845.3,194.2 845.5,183.7 845.8,186.4 846.1,178.9 846.3,186.4 846.6,179.7 846.8,181.7 847.1,193.4 847.3,194.2 847.6,193.4 847.9,179.6 848.1,169.1 848.4,171.1 848.6,170.5 848.9,168.2 849.2,170.4 849.4,183.2 849.7,175.1 849.9,171.5 850.2,194.3 850.4,192.7 850.7,193.8 851.0,192.9 851.2,194.1 851.5,193.9 851.7,193.9 852.0,193.9 852.3,156.2 852.5,142.6 852.8,193.2 853.0,193.2 853.3,193.2 853.5,194.0 853.8,192.9 854.1,193.2 854.3,194.1 854.6,194.1 854.8,165.7 855.1,160.0 855.4,153.9 855.6,168.9 855.9,151.9 856.1,147.4 856.4,143.0 856.7,152.8 856.9,125.9 857.2,113.7 857.4,122.1 857.7,137.2 857.9,118.0 858.2,194.1 858.5,194.0 858.7,85.5 859.0,193.9 859.2,192.9 859.5,142.3 859.8,110.4 860.0,119.4 860.3,115.2 860.5,156.6 860.8,136.2 861.0,159.9 861.3,146.9 861.6,142.5 861.8,167.1 862.1,172.8 862.3,179.4 862.6,156.9 862.9,162.1 863.1,192.9 863.4,173.6 863.6,161.0 863.9,167.0 864.1,154.3 864.4,150.2 864.7,128.0 864.9,104.3 865.2,114.6 865.4,104.5 865.7,83.8 866.0,116.4 866.2,123.7 866.5,70.5 866.7,107.9 867.0,102.7 867.2,121.9 867.5,126.9 867.8,134.1 868.0,127.9 868.3,132.6 868.5,143.0 868.8,138.7 869.1,163.8 869.3,193.3 869.6,154.2 869.8,168.2 870.1,193.5 870.3,161.3 870.6,176.9 870.9,193.8 871.1,159.4 871.4,193.7 871.6,192.7 871.9,144.3 872.2,131.0 872.4,158.8 872.7,184.5 872.9,144.6 873.2,157.2 873.4,194.1 873.7,192.7 874.0,133.8 874.2,139.1 874.5,151.4 874.7,142.7 875.0,144.4 875.3,193.9 875.5,193.6 875.8,192.7 876.0,194.1 876.3,194.3 876.5,128.0 876.8,112.7 877.1,194.1 877.3,135.5 877.6,193.7 877.8,133.4 878.1,131.0 878.4,137.9 878.6,165.5 878.9,148.2 879.1,157.3 879.4,193.8 879.6,147.1 879.9,151.3 880.2,154.2 880.4,145.3 880.7,166.7 880.9,147.4 881.2,148.4 881.5,194.1 881.7,194.1 882.0,192.9 882.2,193.4 882.5,192.7 882.7,194.2 883.0,165.3 883.3,142.5 883.5,146.7 883.8,155.8 884.0,136.5 884.3,194.1 884.6,157.5 884.8,142.2 885.1,153.0 885.3,147.6 885.6,157.6 885.9,163.1 886.1,161.3 886.4,193.6 886.6,193.1 886.9,193.5 887.1,193.6 887.4,178.6 887.7,183.3 887.9,194.2 888.2,178.2 888.4,193.6 888.7,193.3 889.0,193.0 889.2,193.6 889.5,193.7 889.7,193.3 890.0,181.2 890.2,174.9 890.5,183.8 890.8,182.4 891.0,180.6 891.3,186.1 891.5,176.5 891.8,194.0 892.1,194.1 892.3,180.0 892.6,184.8 892.8,187.3 893.1,181.2 893.3,182.9 893.6,186.3 893.9,176.3 894.1,185.2 894.4,178.0 894.6,179.8 894.9,184.0 895.2,185.1 895.4,181.5 895.7,192.3 895.9,190.7 896.2,182.6 896.4,188.7 896.7,185.9 897.0,194.3 897.2,194.3 897.5,194.3 897.7,194.3 898.0,194.3" fill="none" stroke="#0fe80f" stroke-width="1" stroke-linejoin="round"/><polyline points="686.1,229.4 686.5,234.4 686.9,237.1 687.3,237.9 687.8,225.4 688.2,232.2 688.6,228.3 689.0,224.3 689.4,218.2 689.8,225.8 690.2,222.5 690.7,223.4 691.1,220.1 691.5,221.5 691.9,228.7 692.3,228.0 692.7,219.4 693.1,226.6 693.5,228.0 694.0,221.4 694.4,227.1 694.8,231.8 695.2,228.6 695.6,231.0 696.0,234.7 696.4,241.6 696.9,235.4 697.3,234.1 697.7,228.1 698.1,239.1 698.5,234.3 698.9,225.0 699.3,225.6 699.7,236.8 700.2,235.5 700.6,238.5 701.0,235.8 701.4,232.3 701.8,231.0 702.2,243.6 702.6,240.3 703.1,237.8 703.5,236.1 703.9,231.7 704.3,238.6 704.7,234.0 705.1,231.3 705.5,234.9 705.9,229.2 706.4,232.9 706.8,228.7 707.2,222.2 707.6,231.3 708.0,231.3 708.4,228.7 708.8,221.0 709.3,228.5 709.7,224.9 710.1,222.8 710.5,209.8 710.9,228.5 711.3,225.8 711.7,232.0 712.2,215.6 712.6,222.6 713.0,222.8 713.4,225.7 713.8,222.5 714.2,221.6 714.6,237.6 715.0,230.0 715.5,220.9 715.9,226.1 716.3,220.4 716.7,223.5 717.1,224.5 717.5,230.3 717.9,228.5 718.4,236.2 718.8,235.7 719.2,240.0 719.6,246.0 720.0,247.0 720.4,237.5 720.8,236.2 721.2,231.1 721.7,230.6 722.1,231.5 722.5,236.2 722.9,231.4 723.3,235.9 723.7,240.4 724.1,236.4 724.6,242.6 725.0,235.5 725.4,232.8 725.8,245.4 726.2,243.8 726.6,239.8 727.0,234.6 727.4,232.9 727.9,234.4 728.3,226.7 728.7,243.4 729.1,240.1 729.5,235.4 729.9,229.4 730.3,229.5 730.8,224.7 731.2,238.4 731.6,232.4 732.0,229.7 732.4,241.9 732.8,241.6 733.2,229.9 733.6,234.2 734.1,227.6 734.5,227.8 734.9,237.3 735.3,239.5 735.7,241.8 736.1,239.7 736.5,232.2 737.0,231.3 737.4,236.1 737.8,243.6 738.2,233.6 738.6,236.7 739.0,230.9 739.4,230.7 739.9,223.5 740.3,232.2 740.7,229.7 741.1,232.6 741.5,227.7 741.9,220.0 742.3,236.4 742.7,227.3 743.2,219.7 743.6,221.1 744.0,222.2 744.4,222.7 744.8,229.5 745.2,230.8 745.6,225.7 746.1,228.0 746.5,223.7 746.9,226.8 747.3,221.1 747.7,228.7 748.1,229.9 748.5,222.9 748.9,215.2 749.4,214.4 749.8,211.5 750.2,220.5 750.6,216.0 751.0,205.7 751.4,213.9 751.8,215.7 752.3,212.3 752.7,219.7 753.1,219.6 753.5,224.5 753.9,223.0 754.3,225.3 754.7,225.0 755.1,228.2 755.6,218.7 756.0,222.0 756.4,224.7 756.8,225.4 757.2,224.8 757.6,217.4 758.0,224.0 758.5,221.9 758.9,227.1 759.3,224.6 759.7,219.1 760.1,224.6 760.5,229.7 760.9,230.0 761.4,222.0 761.8,226.8 762.2,217.6 762.6,221.2 763.0,227.2 763.4,235.8 763.8,227.7 764.2,239.0 764.7,226.7 765.1,228.4 765.5,232.6 765.9,225.7 766.3,227.7 766.7,237.7 767.1,227.8 767.6,232.2 768.0,230.1 768.4,226.6 768.8,232.9 769.2,235.7 769.6,226.5 770.0,233.8 770.4,223.7 770.9,227.3 771.3,219.2 771.7,228.9 772.1,213.4 772.5,226.4 772.9,228.7 773.3,230.5 773.8,234.7 774.2,230.4 774.6,217.8 775.0,229.0 775.4,234.4 775.8,231.8 776.2,238.4 776.6,242.4 777.1,231.0 777.5,242.4 777.9,237.3 778.3,230.2 778.7,225.4 779.1,228.8 779.5,229.7 780.0,230.8 780.4,227.7 780.8,221.6 781.2,226.0 781.6,224.2 782.0,224.4 782.4,222.3 782.9,228.2 783.3,226.1 783.7,229.8 784.1,238.8 784.5,227.7 784.9,219.4 785.3,227.5 785.7,236.6 786.2,233.2 786.6,240.0 787.0,235.7 787.4,232.4 787.8,227.9 788.2,232.7 788.6,227.4 789.1,230.2 789.5,232.2 789.9,239.7 790.3,250.3 790.7,244.6 791.1,243.9 791.5,235.4 791.9,228.5 792.4,226.8 792.8,236.5 793.2,238.6 793.6,237.6 794.0,235.0 794.4,236.1 794.8,234.2 795.3,236.4 795.7,234.0 796.1,235.7 796.5,235.0 796.9,229.9 797.3,232.9 797.7,241.3 798.1,238.7 798.6,230.0 799.0,235.3 799.4,237.2 799.8,222.4 800.2,235.7 800.6,230.4 801.0,230.5 801.5,230.1 801.9,231.8 802.3,232.2 802.7,233.4 803.1,236.5 803.5,231.6 803.9,222.6 804.3,225.7 804.8,222.0 805.2,224.8 805.6,221.0 806.0,214.4 806.4,220.1 806.8,223.7 807.2,222.9 807.7,219.8 808.1,223.0 808.5,222.7 808.9,228.1 809.3,223.9 809.7,227.9 810.1,234.3 810.6,226.2 811.0,217.5 811.4,227.5 811.8,221.7 812.2,216.3 812.6,218.6 813.0,217.4 813.4,223.4 813.9,215.4 814.3,214.1 814.7,217.4 815.1,220.4 815.5,214.4 815.9,217.3 816.3,224.1 816.8,215.3 817.2,214.1 817.6,223.8 818.0,228.1 818.4,224.7 818.8,224.4 819.2,230.4 819.6,230.2 820.1,229.1 820.5,244.7 820.9,236.8 821.3,236.8 821.7,239.0 822.1,233.0 822.5,232.8 823.0,236.2 823.4,239.2 823.8,242.4 824.2,238.3 824.6,236.2 825.0,240.7 825.4,234.2 825.8,238.4 826.3,246.6 826.7,228.3 827.1,240.1 827.5,246.1 827.9,239.2 828.3,249.3 828.7,238.8 829.2,246.2 829.6,253.1 830.0,253.1 830.4,253.1 830.8,250.2 831.2,244.3 831.6,240.9 832.1,238.4 832.5,247.5 832.9,248.9 833.3,253.1 833.7,251.2 834.1,243.7 834.5,249.1 834.9,238.5 835.4,251.1 835.8,248.4 836.2,247.4 836.6,240.5 837.0,239.7 837.4,249.0 837.8,250.1 838.3,253.1 838.7,253.0 839.1,250.1 839.5,241.4 839.9,240.6 840.3,240.3 840.7,235.5 841.1,244.4 841.6,248.3 842.0,248.0 842.4,235.1 842.8,239.2 843.2,238.3 843.6,242.2 844.0,249.5 844.5,246.9 844.9,244.6 845.3,241.5 845.7,236.1 846.1,234.2 846.5,240.5 846.9,252.2 847.3,246.9 847.8,238.1 848.2,233.5 848.6,239.6 849.0,237.3 849.4,230.5 849.8,233.2 850.2,232.9 850.7,237.7 851.1,231.0 851.5,231.7 851.9,239.5 852.3,229.5 852.7,235.8 853.1,240.4 853.5,229.8 854.0,228.2 854.4,236.9 854.8,222.9 855.2,225.7 855.6,242.7 856.0,226.6 856.4,223.2 856.9,234.1 857.3,238.3 857.7,226.8 858.1,231.8 858.5,236.5 858.9,234.0 859.3,233.4 859.8,229.3 860.2,232.8 860.6,226.9 861.0,227.5 861.4,236.7 861.8,223.7 862.2,222.9 862.6,223.4 863.1,218.4 863.5,217.6 863.9,215.5 864.3,215.2 864.7,218.8 865.1,216.6 865.5,213.5 866.0,216.9 866.4,219.1 866.8,229.0 867.2,219.4 867.6,217.1 868.0,231.9 868.4,228.1 868.8,241.6 869.3,230.0 869.7,224.4 870.1,226.1 870.5,224.0 870.9,222.3 871.3,224.7 871.7,221.6 872.2,234.9 872.6,233.3 873.0,234.9 873.4,237.5 873.8,241.0 874.2,247.5 874.6,248.8 875.0,239.2 875.5,243.9 875.9,244.1 876.3,227.5 876.7,235.9 877.1,231.9 877.5,231.0 877.9,224.4 878.4,226.4 878.8,226.7 879.2,231.8 879.6,231.4 880.0,227.2 880.4,218.9 880.8,221.2 881.3,221.7 881.7,221.6 882.1,213.3 882.5,217.6 882.9,224.7 883.3,229.3 883.7,227.5 884.1,230.3 884.6,225.0 885.0,227.7 885.4,227.4 885.8,229.0 886.2,236.6 886.6,234.8 887.0,233.8 887.5,221.1 887.9,222.1 888.3,228.2 888.7,223.9 889.1,227.4 889.5,235.8 889.9,219.8 890.3,231.2 890.8,230.6 891.2,231.3 891.6,230.0 892.0,236.3 892.4,238.7 892.8,236.5 893.2,234.6 893.7,247.1 894.1,243.0 894.5,244.9 894.9,245.4 895.3,242.9 895.7,237.4 896.1,242.4 896.5,248.0 897.0,241.4 897.4,249.2 897.8,245.8" fill="none" stroke="#2279c8" stroke-width="1.300" stroke-linejoin="round"/><polyline points="686.1,220.2 686.5,218.4 686.9,220.3 687.3,223.6 687.8,218.3 688.2,220.7 688.6,222.5 689.0,222.5 689.4,218.2 689.8,221.0 690.2,220.8 690.7,216.4 691.1,216.8 691.5,215.6 691.9,227.8 692.3,220.0 692.7,216.2 693.1,222.2 693.5,223.6 694.0,221.9 694.4,222.8 694.8,228.1 695.2,223.2 695.6,222.4 696.0,229.8 696.4,231.9 696.9,229.4 697.3,227.2 697.7,220.8 698.1,232.6 698.5,231.2 698.9,225.2 699.3,225.2 699.7,229.4 700.2,231.5 700.6,232.8 701.0,229.6 701.4,230.3 701.8,229.1 702.2,231.4 702.6,229.5 703.1,231.5 703.5,232.1 703.9,231.3 704.3,230.3 704.7,230.6 705.1,229.1 705.5,227.3 705.9,225.9 706.4,224.8 706.8,226.1 707.2,221.5 707.6,224.9 708.0,223.9 708.4,223.9 708.8,217.7 709.3,222.3 709.7,220.3 710.1,218.9 710.5,207.0 710.9,221.8 711.3,224.4 711.7,224.9 712.2,214.6 712.6,214.8 713.0,218.4 713.4,219.8 713.8,215.2 714.2,217.5 714.6,229.0 715.0,220.4 715.5,219.5 715.9,222.5 716.3,214.1 716.7,223.5 717.1,222.3 717.5,222.3 717.9,222.5 718.4,226.2 718.8,225.3 719.2,224.4 719.6,230.9 720.0,223.4 720.4,225.1 720.8,225.8 721.2,226.3 721.7,228.4 722.1,231.2 722.5,231.1 722.9,227.7 723.3,231.3 723.7,231.9 724.1,229.7 724.6,239.8 725.0,233.1 725.4,227.1 725.8,233.2 726.2,237.0 726.6,236.4 727.0,233.1 727.4,229.3 727.9,232.1 728.3,223.8 728.7,235.3 729.1,229.0 729.5,235.4 729.9,226.6 730.3,227.2 730.8,222.9 731.2,233.8 731.6,226.5 732.0,222.1 732.4,229.8 732.8,227.4 733.2,225.0 733.6,231.9 734.1,219.1 734.5,223.3 734.9,232.8 735.3,236.1 735.7,234.1 736.1,235.4 736.5,226.4 737.0,230.5 737.4,233.2 737.8,236.5 738.2,229.1 738.6,230.9 739.0,228.0 739.4,226.8 739.9,222.7 740.3,229.4 740.7,223.9 741.1,222.9 741.5,223.9 741.9,213.7 742.3,228.4 742.7,224.6 743.2,220.7 743.6,219.0 744.0,221.0 744.4,220.9 744.8,228.3 745.2,222.6 745.6,221.0 746.1,223.0 746.5,224.2 746.9,222.8 747.3,209.0 747.7,220.3 748.1,220.6 748.5,213.0 748.9,213.6 749.4,214.5 749.8,211.1 750.2,216.5 750.6,213.4 751.0,206.3 751.4,213.0 751.8,211.5 752.3,208.2 752.7,211.7 753.1,216.8 753.5,218.9 753.9,219.1 754.3,217.0 754.7,223.7 755.1,220.7 755.6,218.5 756.0,218.7 756.4,219.4 756.8,223.4 757.2,223.9 757.6,214.4 758.0,222.1 758.5,219.4 758.9,221.3 759.3,223.1 759.7,219.1 760.1,221.4 760.5,228.2 760.9,224.3 761.4,220.2 761.8,218.4 762.2,215.5 762.6,214.2 763.0,218.9 763.4,226.3 763.8,216.5 764.2,224.1 764.7,219.4 765.1,220.7 765.5,224.6 765.9,223.9 766.3,219.2 766.7,226.1 767.1,223.1 767.6,225.0 768.0,223.4 768.4,224.0 768.8,224.4 769.2,226.2 769.6,220.7 770.0,228.7 770.4,221.2 770.9,224.9 771.3,219.7 771.7,221.0 772.1,210.7 772.5,222.3 772.9,227.1 773.3,223.6 773.8,229.6 774.2,225.1 774.6,215.4 775.0,226.3 775.4,230.3 775.8,226.7 776.2,231.3 776.6,231.6 777.1,227.2 777.5,229.1 777.9,226.2 778.3,223.7 778.7,224.0 779.1,225.8 779.5,224.2 780.0,228.3 780.4,223.5 780.8,222.4 781.2,221.6 781.6,224.8 782.0,221.3 782.4,218.6 782.9,224.4 783.3,221.0 783.7,222.1 784.1,227.5 784.5,221.9 784.9,218.9 785.3,224.2 785.7,226.6 786.2,219.6 786.6,233.5 787.0,222.2 787.4,226.8 787.8,222.4 788.2,227.3 788.6,226.9 789.1,226.1 789.5,228.6 789.9,230.0 790.3,234.7 790.7,232.9 791.1,234.5 791.5,230.7 791.9,228.8 792.4,227.6 792.8,235.2 793.2,234.2 793.6,234.5 794.0,232.6 794.4,230.4 794.8,232.0 795.3,235.8 795.7,235.0 796.1,229.7 796.5,231.8 796.9,226.9 797.3,229.5 797.7,232.0 798.1,228.5 798.6,230.3 799.0,229.5 799.4,225.8 799.8,222.8 800.2,226.7 800.6,227.6 801.0,223.0 801.5,223.0 801.9,223.8 802.3,223.9 802.7,223.7 803.1,223.1 803.5,225.2 803.9,218.1 804.3,218.0 804.8,217.5 805.2,223.9 805.6,220.0 806.0,209.5 806.4,217.6 806.8,220.4 807.2,219.5 807.7,217.2 808.1,219.3 808.5,216.4 808.9,222.9 809.3,219.4 809.7,217.7 810.1,224.4 810.6,215.8 811.0,218.6 811.4,223.7 811.8,217.2 812.2,215.3 812.6,212.3 813.0,213.9 813.4,221.1 813.9,210.7 814.3,211.2 814.7,212.2 815.1,220.6 815.5,212.4 815.9,215.6 816.3,220.0 816.8,211.8 817.2,214.0 817.6,221.8 818.0,221.7 818.4,220.5 818.8,224.8 819.2,222.7 819.6,228.2 820.1,224.5 820.5,235.4 820.9,231.0 821.3,228.2 821.7,228.6 822.1,230.6 822.5,228.5 823.0,231.1 823.4,227.7 823.8,233.1 824.2,230.8 824.6,230.9 825.0,235.1 825.4,232.1 825.8,231.3 826.3,241.5 826.7,227.8 827.1,237.1 827.5,244.0 827.9,237.2 828.3,247.2 828.7,240.6 829.2,244.5 829.6,248.1 830.0,245.6 830.4,245.1 830.8,242.5 831.2,236.4 831.6,232.8 832.1,235.5 832.5,243.7 832.9,243.5 833.3,244.8 833.7,234.4 834.1,234.9 834.5,234.0 834.9,235.2 835.4,244.6 835.8,243.1 836.2,244.5 836.6,234.3 837.0,234.3 837.4,234.6 837.8,235.4 838.3,244.0 838.7,245.7 839.1,243.6 839.5,233.9 839.9,234.6 840.3,234.1 840.7,235.0 841.1,244.4 841.6,245.4 842.0,243.7 842.4,233.8 842.8,234.9 843.2,234.5 843.6,243.6 844.0,244.0 844.5,243.2 844.9,245.1 845.3,235.1 845.7,234.3 846.1,234.9 846.5,241.0 846.9,244.6 847.3,241.2 847.8,238.5 848.2,232.1 848.6,237.8 849.0,237.9 849.4,229.0 849.8,230.0 850.2,233.0 850.7,233.9 851.1,228.7 851.5,229.8 851.9,228.1 852.3,229.6 852.7,225.2 853.1,227.7 853.5,223.2 854.0,222.5 854.4,226.2 854.8,217.6 855.2,223.9 855.6,231.0 856.0,221.3 856.4,218.9 856.9,224.3 857.3,231.9 857.7,224.1 858.1,227.0 858.5,224.0 858.9,226.1 859.3,227.8 859.8,224.6 860.2,223.0 860.6,219.9 861.0,222.6 861.4,222.0 861.8,217.2 862.2,215.8 862.6,214.0 863.1,216.1 863.5,213.8 863.9,212.1 864.3,213.5 864.7,215.6 865.1,210.2 865.5,211.3 866.0,214.3 866.4,214.4 866.8,221.6 867.2,216.3 867.6,213.4 868.0,221.4 868.4,219.5 868.8,229.9 869.3,225.2 869.7,219.8 870.1,222.4 870.5,222.3 870.9,221.6 871.3,222.1 871.7,221.7 872.2,233.4 872.6,230.6 873.0,233.4 873.4,235.9 873.8,231.2 874.2,238.8 874.6,241.2 875.0,236.5 875.5,236.7 875.9,234.8 876.3,223.2 876.7,227.6 877.1,221.0 877.5,225.8 877.9,216.2 878.4,221.9 878.8,219.3 879.2,226.5 879.6,222.6 880.0,217.9 880.4,217.9 880.8,215.9 881.3,217.8 881.7,217.0 882.1,213.3 882.5,212.9 882.9,216.2 883.3,225.0 883.7,217.4 884.1,224.7 884.6,220.0 885.0,219.2 885.4,220.7 885.8,217.8 886.2,224.8 886.6,225.8 887.0,226.8 887.5,221.0 887.9,222.8 888.3,222.5 888.7,222.8 889.1,224.1 889.5,231.2 889.9,220.9 890.3,224.8 890.8,228.6 891.2,229.3 891.6,224.2 892.0,232.2 892.4,231.1 892.8,233.7 893.2,234.1 893.7,237.9 894.1,236.2 894.5,238.2 894.9,234.5 895.3,237.2 895.7,236.9 896.1,241.0 896.5,244.8 897.0,242.6 897.4,249.4 897.8,245.1" fill="none" stroke="#f2f2f2" stroke-width="1.100" stroke-linejoin="round"/><polyline points="686.1,271.1 686.4,307.8 686.6,312.9 686.9,312.8 687.1,267.4 687.4,265.8 687.7,268.0 687.9,269.8 688.2,270.7 688.4,270.9 688.7,266.0 688.9,272.4 689.2,264.1 689.5,267.1 689.7,264.3 690.0,266.6 690.2,269.9 690.5,266.7 690.8,275.6 691.0,310.0 691.3,268.1 691.5,275.9 691.8,265.6 692.0,267.2 692.3,265.4 692.6,270.7 692.8,270.7 693.1,273.1 693.3,268.0 693.6,261.3 693.9,274.2 694.1,270.0 694.4,263.7 694.6,264.2 694.9,276.7 695.1,309.4 695.4,292.1 695.7,293.9 695.9,265.8 696.2,275.0 696.4,270.3 696.7,266.2 697.0,266.3 697.2,273.4 697.5,267.8 697.7,272.4 698.0,273.8 698.2,270.7 698.5,309.8 698.8,269.0 699.0,270.5 699.3,271.3 699.5,270.7 699.8,268.8 700.1,268.9 700.3,269.1 700.6,269.0 700.8,269.4 701.1,271.8 701.3,267.7 701.6,278.2 701.9,268.4 702.1,274.1 702.4,261.8 702.6,269.9 702.9,268.7 703.2,264.4 703.4,266.5 703.7,266.3 703.9,267.7 704.2,270.5 704.4,271.9 704.7,268.3 705.0,274.0 705.2,272.1 705.5,309.5 705.7,279.4 706.0,278.2 706.3,310.9 706.5,286.5 706.8,312.2 707.0,307.7 707.3,274.9 707.6,266.7 707.8,266.8 708.1,267.0 708.3,266.5 708.6,271.7 708.8,290.5 709.1,309.7 709.4,270.9 709.6,270.5 709.9,269.1 710.1,266.9 710.4,269.2 710.7,281.8 710.9,311.6 711.2,263.4 711.4,275.1 711.7,270.7 711.9,268.3 712.2,270.7 712.5,265.7 712.7,269.1 713.0,268.9 713.2,266.1 713.5,269.6 713.8,272.7 714.0,273.1 714.3,271.4 714.5,264.0 714.8,279.8 715.0,310.2 715.3,312.8 715.6,265.3 715.8,276.3 716.1,268.9 716.3,283.6 716.6,310.3 716.9,267.1 717.1,273.2 717.4,264.5 717.6,267.3 717.9,267.7 718.1,293.1 718.4,311.3 718.7,309.7 718.9,264.2 719.2,263.6 719.4,268.3 719.7,311.5 720.0,283.1 720.2,270.4 720.5,270.4 720.7,269.4 721.0,270.1 721.2,269.2 721.5,263.5 721.8,268.7 722.0,265.8 722.3,261.3 722.5,267.4 722.8,263.5 723.1,268.0 723.3,267.1 723.6,265.5 723.8,270.1 724.1,265.3 724.3,266.5 724.6,309.9 724.9,275.8 725.1,308.1 725.4,311.7 725.6,265.6 725.9,271.0 726.2,263.8 726.4,262.6 726.7,267.6 726.9,269.5 727.2,266.5 727.4,308.9 727.7,290.3 728.0,287.9 728.2,309.8 728.5,265.4 728.7,269.0 729.0,267.8 729.3,270.3 729.5,268.3 729.8,267.0 730.0,268.0 730.3,265.4 730.5,266.6 730.8,268.1 731.1,264.6 731.3,310.5 731.6,311.8 731.8,287.9 732.1,263.5 732.4,271.5 732.6,310.8 732.9,309.8 733.1,313.0 733.4,307.5 733.6,271.0 733.9,273.5 734.2,269.3 734.4,274.1 734.7,265.7 734.9,266.2 735.2,289.4 735.5,295.1 735.7,287.5 736.0,307.9 736.2,268.3 736.5,267.5 736.8,276.5 737.0,269.2 737.3,273.0 737.5,312.0 737.8,294.3 738.0,270.0 738.3,270.4 738.6,268.8 738.8,269.4 739.1,267.7 739.3,267.1 739.6,265.8 739.9,283.0 740.1,308.5 740.4,307.6 740.6,278.3 740.9,267.6 741.1,271.4 741.4,267.8 741.7,270.5 741.9,267.8 742.2,308.4 742.4,279.7 742.7,277.7 743.0,285.2 743.2,289.7 743.5,312.3 743.7,291.3 744.0,312.9 744.2,283.2 744.5,266.8 744.8,274.5 745.0,269.5 745.3,268.7 745.5,274.9 745.8,269.5 746.1,270.0 746.3,267.2 746.6,270.2 746.8,266.9 747.1,264.6 747.3,265.4 747.6,269.4 747.9,269.8 748.1,269.7 748.4,274.6 748.6,273.8 748.9,282.0 749.2,309.1 749.4,279.5 749.7,282.9 749.9,266.8 750.2,270.3 750.4,265.1 750.7,282.0 751.0,280.1 751.2,308.7 751.5,311.3 751.7,270.7 752.0,271.0 752.3,264.0 752.5,273.0 752.8,280.4 753.0,312.9 753.3,267.5 753.5,272.3 753.8,272.3 754.1,271.4 754.3,268.3 754.6,310.6 754.8,268.9 755.1,276.2 755.4,285.0 755.6,269.4 755.9,274.0 756.1,263.1 756.4,271.1 756.6,311.9 756.9,287.2 757.2,309.2 757.4,288.7 757.7,268.9 757.9,267.2 758.2,267.2 758.5,267.9 758.7,272.2 759.0,268.5 759.2,311.2 759.5,265.9 759.7,308.7 760.0,307.4 760.3,275.9 760.5,291.1 760.8,266.2 761.0,274.3 761.3,273.1 761.6,309.3 761.8,309.7 762.1,285.0 762.3,281.5 762.6,270.2 762.8,274.6 763.1,271.4 763.4,262.2 763.6,265.7 763.9,263.8 764.1,265.6 764.4,266.6 764.7,270.0 764.9,270.3 765.2,262.1 765.4,268.2 765.7,265.0 766.0,265.5 766.2,266.4 766.5,267.8 766.7,267.0 767.0,275.7 767.2,270.5 767.5,269.5 767.8,264.6 768.0,274.9 768.3,274.1 768.5,269.0 768.8,267.1 769.1,266.5 769.3,269.7 769.6,265.8 769.8,264.2 770.1,271.6 770.3,269.1 770.6,268.6 770.9,291.9 771.1,310.0 771.4,312.7 771.6,286.9 771.9,309.4 772.2,267.4 772.4,271.8 772.7,268.6 772.9,271.5 773.2,267.5 773.4,269.1 773.7,274.4 774.0,266.0 774.2,269.6 774.5,266.8 774.7,287.1 775.0,310.4 775.3,266.5 775.5,308.9 775.8,263.3 776.0,311.0 776.3,308.8 776.5,310.1 776.8,307.6 777.1,277.9 777.3,283.2 777.6,282.0 777.8,284.9 778.1,283.8 778.4,309.3 778.6,294.2 778.9,311.0 779.1,266.9 779.4,266.7 779.6,274.3 779.9,268.3 780.2,269.6 780.4,270.5 780.7,311.1 780.9,266.9 781.2,270.7 781.5,271.8 781.7,273.6 782.0,267.2 782.2,271.8 782.5,283.3 782.7,269.2 783.0,288.9 783.3,288.5 783.5,281.7 783.8,284.7 784.0,292.4 784.3,261.5 784.6,272.0 784.8,269.5 785.1,269.9 785.3,272.0 785.6,268.9 785.8,269.0 786.1,275.7 786.4,267.7 786.6,272.3 786.9,282.5 787.1,291.7 787.4,312.4 787.7,294.7 787.9,279.9 788.2,287.2 788.4,310.2 788.7,310.1 788.9,268.9 789.2,271.9 789.5,262.5 789.7,271.8 790.0,279.3 790.2,285.0 790.5,265.4 790.8,268.9 791.0,266.0 791.3,266.5 791.5,266.2 791.8,266.5 792.0,274.6 792.3,268.0 792.6,309.6 792.8,285.3 793.1,270.7 793.3,261.3 793.6,271.3 793.9,266.1 794.1,261.7 794.4,269.4 794.6,270.2 794.9,270.3 795.2,309.2 795.4,279.6 795.7,308.3 795.9,272.4 796.2,265.4 796.4,263.6 796.7,262.6 797.0,269.9 797.2,268.2 797.5,268.1 797.7,267.6 798.0,264.7 798.3,268.2 798.5,271.6 798.8,271.6 799.0,266.8 799.3,280.7 799.5,277.7 799.8,309.8 800.1,291.4 800.3,312.7 800.6,294.9 800.8,268.0 801.1,309.1 801.4,286.5 801.6,269.1 801.9,265.8 802.1,266.6 802.4,270.7 802.6,269.9 802.9,265.2 803.2,269.4 803.4,269.4 803.7,265.5 803.9,282.5 804.2,309.7 804.5,311.4 804.7,277.3 805.0,264.4 805.2,271.9 805.5,270.8 805.7,263.7 806.0,271.6 806.3,307.9 806.5,312.0 806.8,289.6 807.0,280.2 807.3,310.5 807.6,307.7 807.8,311.4 808.1,271.3 808.3,265.0 808.6,266.8 808.8,308.2 809.1,311.1 809.4,309.7 809.6,309.2 809.9,268.5 810.1,274.3 810.4,271.8 810.7,270.2 810.9,267.2 811.2,280.1 811.4,310.1 811.7,294.1 811.9,273.9 812.2,271.5 812.5,263.3 812.7,270.7 813.0,277.6 813.2,267.6 813.5,266.6 813.8,268.0 814.0,272.3 814.3,277.2 814.5,265.7 814.8,269.1 815.0,265.3 815.3,266.2 815.6,264.5 815.8,268.9 816.1,272.1 816.3,268.5 816.6,264.8 816.9,309.9 817.1,268.9 817.4,266.4 817.6,274.8 817.9,269.1 818.1,267.1 818.4,266.9 818.7,262.8 818.9,266.7 819.2,261.4 819.4,271.4 819.7,268.1 820.0,273.1 820.2,267.9 820.5,267.9 820.7,269.7 821.0,271.6 821.2,309.6 821.5,269.7 821.8,311.5 822.0,279.0 822.3,268.0 822.5,261.3 822.8,266.1 823.1,263.8 823.3,270.6 823.6,273.0 823.8,265.1 824.1,268.5 824.3,264.7 824.6,267.4 824.9,275.0 825.1,264.4 825.4,269.7 825.6,261.3 825.9,267.8 826.2,267.2 826.4,310.3 826.7,311.2 826.9,286.9 827.2,267.8 827.5,267.3 827.7,268.0 828.0,269.1 828.2,263.2 828.5,308.8 828.7,309.0 829.0,309.6 829.3,293.5 829.5,291.2 829.8,295.7 830.0,300.4 830.3,301.5 830.6,308.3 830.8,313.0 831.1,311.9 831.3,311.4 831.6,313.0 831.8,311.3 832.1,313.0 832.4,312.7 832.6,313.0 832.9,313.0 833.1,313.0 833.4,311.7 833.7,312.5 833.9,313.0 834.2,312.5 834.4,310.4 834.7,313.0 834.9,313.0 835.2,312.9 835.5,311.1 835.7,310.6 836.0,311.5 836.2,313.0 836.5,310.7 836.8,309.1 837.0,309.8 837.3,311.2 837.5,307.8 837.8,309.7 838.0,308.4 838.3,307.5 838.6,308.5 838.8,305.1 839.1,307.3 839.3,304.6 839.6,302.8 839.9,308.7 840.1,312.8 840.4,304.3 840.6,305.1 840.9,310.2 841.1,307.2 841.4,306.9 841.7,311.2 841.9,306.6 842.2,310.3 842.4,310.9 842.7,307.5 843.0,310.3 843.2,309.1 843.5,313.0 843.7,309.8 844.0,307.9 844.2,304.4 844.5,305.5 844.8,303.2 845.0,296.7 845.3,295.6 845.5,293.1 845.8,297.0 846.1,285.9 846.3,283.7 846.6,281.0 846.8,280.9 847.1,281.2 847.3,278.7 847.6,282.3 847.9,283.9 848.1,283.9 848.4,278.7 848.6,307.7 848.9,276.8 849.2,309.1 849.4,280.8 849.7,276.0 849.9,271.8 850.2,271.5 850.4,275.3 850.7,267.0 851.0,277.0 851.2,312.0 851.5,308.1 851.7,282.2 852.0,312.3 852.3,281.0 852.5,266.9 852.8,265.5 853.0,266.3 853.3,281.0 853.5,276.4 853.8,312.6 854.1,270.0 854.3,273.8 854.6,265.7 854.8,266.0 855.1,268.4 855.4,265.8 855.6,262.6 855.9,266.4 856.1,269.5 856.4,286.8 856.7,280.1 856.9,286.5 857.2,291.0 857.4,294.2 857.7,274.9 857.9,271.4 858.2,267.6 858.5,272.4 858.7,269.1 859.0,269.5 859.2,307.2 859.5,263.7 859.8,267.7 860.0,261.3 860.3,266.9 860.5,268.3 860.8,267.4 861.0,310.6 861.3,290.8 861.6,308.8 861.8,307.9 862.1,312.7 862.3,307.3 862.6,308.8 862.9,282.5 863.1,310.1 863.4,265.9 863.6,307.9 863.9,266.3 864.1,309.1 864.4,312.0 864.7,310.6 864.9,312.6 865.2,270.7 865.4,265.1 865.7,268.5 866.0,261.3 866.2,266.1 866.5,280.2 866.7,286.8 867.0,310.4 867.2,292.4 867.5,261.3 867.8,269.4 868.0,265.7 868.3,261.3 868.5,269.2 868.8,266.7 869.1,269.0 869.3,262.6 869.6,263.8 869.8,261.4 870.1,265.0 870.3,265.5 870.6,312.2 870.9,311.1 871.1,294.7 871.4,308.9 871.6,309.8 871.9,285.0 872.2,261.3 872.4,308.0 872.7,265.0 872.9,271.3 873.2,268.5 873.4,263.9 873.7,263.6 874.0,271.1 874.2,263.4 874.5,261.3 874.7,274.6 875.0,264.1 875.3,265.0 875.5,261.3 875.8,311.9 876.0,313.0 876.3,284.3 876.5,292.0 876.8,286.1 877.1,312.3 877.3,280.6 877.6,309.0 877.8,276.6 878.1,269.4 878.4,272.6 878.6,263.9 878.9,266.3 879.1,266.2 879.4,265.9 879.6,266.1 879.9,261.3 880.2,263.8 880.4,266.2 880.7,261.3 880.9,265.3 881.2,267.0 881.5,263.4 881.7,264.8 882.0,262.7 882.2,262.9 882.5,261.3 882.7,266.7 883.0,266.5 883.3,261.3 883.5,280.5 883.8,312.9 884.0,265.8 884.3,270.2 884.6,261.3 884.8,307.3 885.1,279.6 885.3,281.0 885.6,293.3 885.9,261.3 886.1,267.8 886.4,261.6 886.6,263.8 886.9,266.3 887.1,261.3 887.4,264.5 887.7,266.9 887.9,265.8 888.2,261.3 888.4,265.0 888.7,264.8 889.0,261.4 889.2,262.8 889.5,272.7 889.7,270.6 890.0,310.5 890.2,307.9 890.5,284.6 890.8,291.3 891.0,309.5 891.3,270.3 891.5,268.4 891.8,274.7 892.1,274.5 892.3,279.6 892.6,278.7 892.8,278.4 893.1,275.9 893.3,312.2 893.6,311.6 893.9,283.9 894.1,308.8 894.4,284.2 894.6,288.0 894.9,290.0 895.2,291.0 895.4,290.4 895.7,294.4 895.9,302.1 896.2,308.3 896.4,311.4 896.7,309.5 897.0,308.3 897.2,306.9 897.5,309.3 897.7,310.5 898.0,310.7" fill="none" stroke="#dede10" stroke-width="1" stroke-linejoin="round"/><polygon points="690.0,336.9 690.8,336.8 691.6,335.9 692.4,334.9 693.2,334.4 694.0,334.2 694.8,334.5 695.6,334.4 696.4,334.2 697.2,333.6 698.0,334.0 698.8,334.2 699.6,334.9 700.4,335.6 701.2,335.4 702.0,335.1 702.8,334.1 703.6,334.8 704.4,334.9 705.2,334.9 706.0,335.8 706.8,336.3 707.6,337.2 708.4,337.6 709.2,337.7 710.0,337.7 710.8,337.1 711.6,336.8 712.4,336.6 713.2,336.2 714.0,336.7 714.8,336.1 715.6,335.5 716.4,334.5 717.2,332.4 718.0,332.1 718.8,331.5 719.6,331.9 720.4,332.7 721.2,332.6 722.0,333.4 722.8,333.0 723.6,332.5 724.4,333.1 725.2,332.8 726.0,332.8 726.8,333.6 727.6,333.1 728.4,333.4 729.2,334.3 730.0,334.8 730.8,336.3 731.6,337.0 732.4,337.3 733.2,336.7 734.0,336.7 734.8,335.7 735.6,334.8 736.4,334.3 737.2,334.2 738.0,335.3 738.8,335.3 739.6,336.7 740.4,335.8 741.2,335.2 742.0,335.2 742.8,333.9 743.6,334.2 744.4,334.7 745.2,334.1 746.0,334.8 746.8,334.5 747.6,334.3 748.4,334.9 749.2,334.7 750.0,334.9 750.8,334.2 751.6,333.4 752.4,333.6 753.2,332.7 754.0,332.6 754.8,333.4 755.6,332.6 756.4,333.3 757.2,333.8 758.0,333.7 758.8,333.8 759.6,332.7 760.4,332.0 761.2,332.4 762.0,334.8 762.8,337.7 763.6,340.5 764.4,342.7 765.2,344.9 766.0,347.0 766.8,348.0 767.6,349.5 768.4,351.9 769.2,353.5 770.0,354.7 770.8,356.3 771.6,356.1 772.4,356.3 773.2,357.0 774.0,356.9 774.8,356.5 775.6,356.4 776.4,356.6 777.2,356.7 778.0,357.0 778.8,356.7 779.6,356.8 780.4,356.6 781.2,356.8 782.0,357.2 782.8,357.0 783.6,356.8 784.4,357.1 785.2,356.4 786.0,356.2 786.8,356.2 787.6,353.7 788.4,352.5 789.2,350.8 790.0,349.5 790.8,348.7 791.6,346.4 792.4,344.0 793.2,342.0 794.0,340.6 794.8,339.2 795.6,337.9 796.4,337.0 797.2,334.8 798.0,333.1 798.8,332.6 799.6,331.9 800.4,331.2 801.2,330.7 802.0,330.1 802.8,330.1 803.6,331.7 804.4,332.4 805.2,333.3 806.0,334.1 806.8,334.2 807.6,335.4 808.4,335.7 809.2,335.3 810.0,335.9 810.8,335.2 811.6,335.1 812.4,335.6 813.2,335.4 814.0,335.8 814.8,335.8 815.6,335.6 816.4,335.4 817.2,335.1 818.0,334.8 818.8,334.4 819.6,333.1 820.4,334.2 821.2,333.8 822.0,332.9 822.8,334.3 823.6,333.1 824.4,333.6 825.2,334.8 826.0,334.3 826.8,334.9 827.6,334.8 828.4,334.7 829.2,334.6 830.0,334.6 830.8,334.9 831.6,335.6 832.4,336.7 833.2,338.1 834.0,338.6 834.8,338.2 835.6,338.1 836.4,336.8 837.2,336.3 838.0,336.3 838.8,336.3 839.6,337.2 840.4,337.1 841.2,337.1 842.0,336.2 842.8,335.7 843.6,335.8 844.4,336.0 845.2,336.1 846.0,336.8 846.8,337.3 847.6,337.2 848.4,337.4 849.2,336.6 850.0,336.3 850.8,336.5 851.6,337.1 852.4,337.3 853.2,337.2 854.0,337.2 854.8,336.4 855.6,335.7 856.4,334.5 857.2,333.3 858.0,333.5 858.8,332.7 859.6,333.1 860.4,332.6 861.2,332.0 862.0,334.2 862.8,335.0 863.6,337.3 864.4,342.3 865.2,346.8 866.0,351.8 866.8,353.8 867.6,356.9 868.4,358.4 869.2,359.4 870.0,358.9 870.8,358.5 871.6,359.0 872.4,358.5 873.2,360.3 874.0,360.8 874.8,360.7 875.6,361.3 876.4,362.2 877.2,362.4 878.0,362.9 878.8,362.8 879.6,362.0 880.4,361.6 881.2,361.7 882.0,363.1 882.8,363.7 883.6,364.8 884.4,365.6 885.2,365.6 886.0,365.7 886.8,366.4 887.6,366.5 888.4,366.0 889.2,366.5 890.0,364.9 890.8,364.4 891.6,364.6 892.4,363.6 893.2,364.7 894.0,364.8 894.8,364.5 895.6,366.1 896.4,366.6 897.2,366.9 898.0,367.3 898.2,372.6 690,372.6" fill="#b2590f"/><path d="M690.0 336.5 V372.6 M692.4 336.0 V372.6 M693.2 335.9 V372.6 M694.0 335.7 V372.6 M696.4 335.2 V372.6 M698.0 334.9 V372.6 M700.4 334.7 V372.6 M711.6 337.7 V372.6 M716.4 335.3 V372.6 M726.0 334.8 V372.6 M729.2 335.4 V372.6 M732.4 336.0 V372.6 M733.2 336.2 V372.6 M734.0 336.3 V372.6 M735.6 336.4 V372.6 M736.4 336.2 V372.6 M742.0 335.1 V372.6 M743.6 334.8 V372.6 M747.6 334.2 V372.6 M748.4 334.2 V372.6 M758.0 334.0 V372.6 M760.4 334.4 V372.6 M761.2 335.0 V372.6 M763.6 341.6 V372.6 M766.0 347.3 V372.6 M767.6 350.3 V372.6 M770.8 356.1 V372.6 M773.2 356.8 V372.6 M774.0 356.9 V372.6 M786.0 356.6 V372.6 M789.2 352.1 V372.6 M806.8 334.5 V372.6 M808.4 335.6 V372.6 M814.0 336.4 V372.6 M820.4 334.2 V372.6 M821.2 333.8 V372.6 M825.2 334.7 V372.6 M828.4 335.9 V372.6 M833.2 337.3 V372.6 M834.8 337.7 V372.6 M836.4 338.1 V372.6 M839.6 338.1 V372.6 M846.0 336.5 V372.6 M848.4 336.9 V372.6 M849.2 337.0 V372.6 M850.8 337.3 V372.6 M856.4 334.6 V372.6 M858.8 333.0 V372.6 M861.2 331.9 V372.6 M862.0 333.5 V372.6 M868.4 358.6 V372.6 M870.0 359.2 V372.6 M871.6 359.7 V372.6" stroke="#ff8c0a" stroke-width="1" fill="none"/><path d="M795.5 337.2 V372.6 M813.4 335.8 V372.6 M821.4 333.3 V372.6 M859.6 331.9 V372.6 M866.4 353.2 V372.6" stroke="#9a28e8" stroke-width="1" fill="none"/><polyline points="690.0,336.9 690.8,336.8 691.6,335.9 692.4,334.9 693.2,334.4 694.0,334.2 694.8,334.5 695.6,334.4 696.4,334.2 697.2,333.6 698.0,334.0 698.8,334.2 699.6,334.9 700.4,335.6 701.2,335.4 702.0,335.1 702.8,334.1 703.6,334.8 704.4,334.9 705.2,334.9 706.0,335.8 706.8,336.3 707.6,337.2 708.4,337.6 709.2,337.7 710.0,337.7 710.8,337.1 711.6,336.8 712.4,336.6 713.2,336.2 714.0,336.7 714.8,336.1 715.6,335.5 716.4,334.5 717.2,332.4 718.0,332.1 718.8,331.5 719.6,331.9 720.4,332.7 721.2,332.6 722.0,333.4 722.8,333.0 723.6,332.5 724.4,333.1 725.2,332.8 726.0,332.8 726.8,333.6 727.6,333.1 728.4,333.4 729.2,334.3 730.0,334.8 730.8,336.3 731.6,337.0 732.4,337.3 733.2,336.7 734.0,336.7 734.8,335.7 735.6,334.8 736.4,334.3 737.2,334.2 738.0,335.3 738.8,335.3 739.6,336.7 740.4,335.8 741.2,335.2 742.0,335.2 742.8,333.9 743.6,334.2 744.4,334.7 745.2,334.1 746.0,334.8 746.8,334.5 747.6,334.3 748.4,334.9 749.2,334.7 750.0,334.9 750.8,334.2 751.6,333.4 752.4,333.6 753.2,332.7 754.0,332.6 754.8,333.4 755.6,332.6 756.4,333.3 757.2,333.8 758.0,333.7 758.8,333.8 759.6,332.7 760.4,332.0 761.2,332.4 762.0,334.8 762.8,337.7 763.6,340.5 764.4,342.7 765.2,344.9 766.0,347.0 766.8,348.0 767.6,349.5 768.4,351.9 769.2,353.5 770.0,354.7 770.8,356.3 771.6,356.1 772.4,356.3 773.2,357.0 774.0,356.9 774.8,356.5 775.6,356.4 776.4,356.6 777.2,356.7 778.0,357.0 778.8,356.7 779.6,356.8 780.4,356.6 781.2,356.8 782.0,357.2 782.8,357.0 783.6,356.8 784.4,357.1 785.2,356.4 786.0,356.2 786.8,356.2 787.6,353.7 788.4,352.5 789.2,350.8 790.0,349.5 790.8,348.7 791.6,346.4 792.4,344.0 793.2,342.0 794.0,340.6 794.8,339.2 795.6,337.9 796.4,337.0 797.2,334.8 798.0,333.1 798.8,332.6 799.6,331.9 800.4,331.2 801.2,330.7 802.0,330.1 802.8,330.1 803.6,331.7 804.4,332.4 805.2,333.3 806.0,334.1 806.8,334.2 807.6,335.4 808.4,335.7 809.2,335.3 810.0,335.9 810.8,335.2 811.6,335.1 812.4,335.6 813.2,335.4 814.0,335.8 814.8,335.8 815.6,335.6 816.4,335.4 817.2,335.1 818.0,334.8 818.8,334.4 819.6,333.1 820.4,334.2 821.2,333.8 822.0,332.9 822.8,334.3 823.6,333.1 824.4,333.6 825.2,334.8 826.0,334.3 826.8,334.9 827.6,334.8 828.4,334.7 829.2,334.6 830.0,334.6 830.8,334.9 831.6,335.6 832.4,336.7 833.2,338.1 834.0,338.6 834.8,338.2 835.6,338.1 836.4,336.8 837.2,336.3 838.0,336.3 838.8,336.3 839.6,337.2 840.4,337.1 841.2,337.1 842.0,336.2 842.8,335.7 843.6,335.8 844.4,336.0 845.2,336.1 846.0,336.8 846.8,337.3 847.6,337.2 848.4,337.4 849.2,336.6 850.0,336.3 850.8,336.5 851.6,337.1 852.4,337.3 853.2,337.2 854.0,337.2 854.8,336.4 855.6,335.7 856.4,334.5 857.2,333.3 858.0,333.5 858.8,332.7 859.6,333.1 860.4,332.6 861.2,332.0 862.0,334.2 862.8,335.0 863.6,337.3 864.4,342.3 865.2,346.8 866.0,351.8 866.8,353.8 867.6,356.9 868.4,358.4 869.2,359.4 870.0,358.9 870.8,358.5 871.6,359.0 872.4,358.5 873.2,360.3 874.0,360.8 874.8,360.7 875.6,361.3 876.4,362.2 877.2,362.4 878.0,362.9 878.8,362.8 879.6,362.0 880.4,361.6 881.2,361.7 882.0,363.1 882.8,363.7 883.6,364.8 884.4,365.6 885.2,365.6 886.0,365.7 886.8,366.4 887.6,366.5 888.4,366.0 889.2,366.5 890.0,364.9 890.8,364.4 891.6,364.6 892.4,363.6 893.2,364.7 894.0,364.8 894.8,364.5 895.6,366.1 896.4,366.6 897.2,366.9 898.0,367.3" fill="none" stroke="#ff9a1a" stroke-width=".9"/><path d="M868 372.0 H898" stroke="#ff8c0a" stroke-width="1.200"/><polyline points="686.1,418.6 686.4,417.3 686.6,415.5 686.9,415.6 687.1,407.9 687.4,415.2 687.7,417.5 687.9,409.1 688.2,409.7 688.4,418.9 688.7,418.1 688.9,430.7 689.2,411.8 689.5,412.9 689.7,412.8 690.0,412.6 690.2,417.4 690.5,412.3 690.8,414.0 691.0,419.0 691.3,419.5 691.5,411.2 691.8,414.8 692.0,427.2 692.3,424.6 692.6,415.7 692.8,409.5 693.1,414.9 693.3,408.0 693.6,414.5 693.9,413.0 694.1,403.8 694.4,425.8 694.6,419.7 694.9,410.4 695.1,410.7 695.4,410.3 695.7,413.7 695.9,417.6 696.2,422.5 696.4,421.5 696.7,408.3 697.0,407.7 697.2,416.0 697.5,413.0 697.7,416.4 698.0,417.0 698.2,414.8 698.5,413.3 698.8,428.4 699.0,405.1 699.3,412.8 699.5,414.7 699.8,416.0 700.1,418.4 700.3,410.3 700.6,407.6 700.8,410.6 701.1,410.2 701.3,415.2 701.6,416.4 701.9,416.8 702.1,417.0 702.4,411.9 702.6,410.2 702.9,416.6 703.2,416.1 703.4,416.9 703.7,413.9 703.9,399.1 704.2,425.7 704.4,406.5 704.7,413.3 705.0,411.6 705.2,423.5 705.5,413.9 705.7,410.0 706.0,417.0 706.3,418.4 706.5,412.5 706.8,420.6 707.0,416.0 707.3,421.3 707.6,410.8 707.8,417.8 708.1,422.4 708.3,431.4 708.6,408.2 708.8,416.1 709.1,416.0 709.4,421.1 709.6,417.7 709.9,412.0 710.1,416.1 710.4,411.6 710.7,420.7 710.9,415.7 711.2,428.2 711.4,411.2 711.7,418.4 711.9,419.4 712.2,413.3 712.5,414.1 712.7,416.3 713.0,415.3 713.2,419.5 713.5,417.7 713.8,413.6 714.0,427.6 714.3,413.4 714.5,421.3 714.8,413.1 715.0,424.6 715.3,405.9 715.6,417.5 715.8,418.6 716.1,412.1 716.3,422.7 716.6,415.1 716.9,410.5 717.1,421.5 717.4,416.9 717.6,409.6 717.9,422.0 718.1,421.7 718.4,425.6 718.7,420.4 718.9,416.3 719.2,409.4 719.4,423.8 719.7,413.3 720.0,420.9 720.2,422.1 720.5,414.0 720.7,421.5 721.0,430.3 721.2,427.3 721.5,420.9 721.8,414.0 722.0,417.0 722.3,411.3 722.5,419.7 722.8,411.7 723.1,421.1 723.3,430.2 723.6,415.0 723.8,413.0 724.1,414.3 724.3,411.8 724.6,412.4 724.9,419.8 725.1,419.6 725.4,418.4 725.6,416.1 725.9,421.2 726.2,409.1 726.4,414.7 726.7,414.9 726.9,416.9 727.2,416.8 727.4,415.0 727.7,418.5 728.0,426.5 728.2,424.5 728.5,411.3 728.7,414.9 729.0,413.9 729.3,419.6 729.5,418.5 729.8,420.0 730.0,418.1 730.3,412.8 730.5,417.0 730.8,413.6 731.1,413.8 731.3,420.4 731.6,418.5 731.8,418.4 732.1,420.3 732.4,409.8 732.6,417.3 732.9,418.6 733.1,417.0 733.4,412.5 733.6,415.7 733.9,412.8 734.2,412.6 734.4,415.6 734.7,415.6 734.9,413.8 735.2,413.9 735.5,415.3 735.7,418.8 736.0,419.1 736.2,415.7 736.5,417.0 736.8,412.2 737.0,416.5 737.3,413.6 737.5,415.4 737.8,418.6 738.0,425.1 738.3,417.8 738.6,415.0 738.8,427.6 739.1,401.8 739.3,412.8 739.6,413.6 739.9,431.4 740.1,413.3 740.4,414.7 740.6,431.8 740.9,421.9 741.1,409.8 741.4,424.3 741.7,412.5 741.9,414.3 742.2,413.8 742.4,416.6 742.7,406.7 743.0,426.2 743.2,426.2 743.5,404.6 743.7,417.4 744.0,419.0 744.2,410.6 744.5,416.9 744.8,423.0 745.0,414.7 745.3,416.7 745.5,415.8 745.8,419.3 746.1,421.8 746.3,422.2 746.6,412.9 746.8,425.1 747.1,418.1 747.3,412.4 747.6,431.8 747.9,404.0 748.1,408.6 748.4,431.8 748.6,427.1 748.9,420.2 749.2,414.6 749.4,425.1 749.7,410.0 749.9,425.0 750.2,422.3 750.4,425.6 750.7,407.5 751.0,418.7 751.2,421.1 751.5,416.1 751.7,415.7 752.0,417.4 752.3,423.8 752.5,406.6 752.8,415.4 753.0,419.9 753.3,416.7 753.5,413.3 753.8,410.3 754.1,421.3 754.3,407.0 754.6,426.5 754.8,431.8 755.1,420.9 755.4,423.4 755.6,410.8 755.9,413.2 756.1,414.5 756.4,414.1 756.6,416.0 756.9,412.1 757.2,409.7 757.4,418.0 757.7,412.3 757.9,412.8 758.2,411.3 758.5,412.4 758.7,410.4 759.0,417.9 759.2,410.8 759.5,416.7 759.7,417.7 760.0,409.1 760.3,415.4 760.5,413.7 760.8,410.5 761.0,419.8 761.3,405.2 761.6,411.4 761.8,413.6 762.1,411.6 762.3,411.1 762.6,409.8 762.8,431.8 763.1,410.7 763.4,415.3 763.6,425.1 763.9,404.2 764.1,409.8 764.4,414.9 764.7,411.4 764.9,403.3 765.2,421.5 765.4,413.9 765.7,414.8 766.0,412.3 766.2,420.2 766.5,413.4 766.7,421.3 767.0,415.6 767.2,410.6 767.5,425.6 767.8,420.1 768.0,416.1 768.3,414.5 768.5,414.4 768.8,406.1 769.1,407.0 769.3,407.1 769.6,417.2 769.8,412.7 770.1,416.5 770.3,412.8 770.6,421.0 770.9,427.8 771.1,418.9 771.4,425.4 771.6,424.0 771.9,407.7 772.2,427.2 772.4,408.7 772.7,427.1 772.9,417.8 773.2,410.3 773.4,416.2 773.7,417.3 774.0,408.1 774.2,411.6 774.5,408.9 774.7,419.6 775.0,427.2 775.3,426.0 775.5,417.3 775.8,416.0 776.0,422.8 776.3,424.4 776.5,413.2 776.8,414.5 777.1,415.5 777.3,413.1 777.6,425.2 777.8,408.2 778.1,412.9 778.4,414.2 778.6,411.8 778.9,421.8 779.1,427.4 779.4,412.3 779.6,415.1 779.9,409.4 780.2,416.3 780.4,420.7 780.7,415.9 780.9,425.6 781.2,418.2 781.5,418.0 781.7,413.3 782.0,411.2 782.2,423.6 782.5,416.8 782.7,416.3 783.0,411.4 783.3,419.6 783.5,412.8 783.8,410.4 784.0,418.0 784.3,421.3 784.6,421.8 784.8,415.6 785.1,418.3 785.3,420.0 785.6,406.2 785.8,426.1 786.1,404.5 786.4,407.4 786.6,415.3 786.9,415.0 787.1,416.7 787.4,407.0 787.7,416.2 787.9,413.1 788.2,416.2 788.4,414.9 788.7,406.4 788.9,423.6 789.2,410.4 789.5,414.8 789.7,412.8 790.0,409.1 790.2,412.1 790.5,413.7 790.8,411.3 791.0,421.3 791.3,416.3 791.5,415.3 791.8,416.0 792.0,411.6 792.3,414.3 792.6,417.2 792.8,419.6 793.1,416.8 793.3,413.0 793.6,431.0 793.9,406.2 794.1,414.6 794.4,413.5 794.6,417.8 794.9,412.1 795.2,412.4 795.4,414.7 795.7,417.9 795.9,420.2 796.2,410.6 796.4,412.1 796.7,414.3 797.0,416.0 797.2,411.3 797.5,411.4 797.7,418.5 798.0,418.3 798.3,415.0 798.5,415.9 798.8,427.8 799.0,421.2 799.3,417.7 799.5,410.8 799.8,420.5 800.1,416.4 800.3,410.0 800.6,424.0 800.8,414.1 801.1,421.8 801.4,423.0 801.6,425.3 801.9,416.2 802.1,431.8 802.4,411.8 802.6,410.1 802.9,414.8 803.2,422.1 803.4,414.6 803.7,419.0 803.9,410.9 804.2,414.5 804.5,421.0 804.7,415.8 805.0,409.3 805.2,410.4 805.5,416.2 805.7,411.5 806.0,411.9 806.3,418.1 806.5,419.7 806.8,416.0 807.0,420.7 807.3,412.5 807.6,421.3 807.8,409.5 808.1,420.2 808.3,428.4 808.6,422.9 808.8,412.1 809.1,423.5 809.4,413.1 809.6,418.5 809.9,416.0 810.1,413.8 810.4,417.0 810.7,407.4 810.9,416.5 811.2,419.3 811.4,410.2 811.7,415.4 811.9,417.1 812.2,410.7 812.5,414.3 812.7,413.3 813.0,408.5 813.2,431.1 813.5,421.0 813.8,425.3 814.0,427.3 814.3,428.7 814.5,412.7 814.8,416.0 815.0,420.7 815.3,412.5 815.6,411.6 815.8,407.6 816.1,410.4 816.3,410.0 816.6,418.9 816.9,416.7 817.1,412.5 817.4,427.7 817.6,421.9 817.9,413.3 818.1,427.0 818.4,413.8 818.7,423.6 818.9,421.6 819.2,418.7 819.4,416.7 819.7,414.8 820.0,412.1 820.2,412.7 820.5,416.0 820.7,420.4 821.0,427.1 821.2,411.2 821.5,414.0 821.8,414.0 822.0,417.0 822.3,415.0 822.5,416.1 822.8,414.2 823.1,414.5 823.3,425.6 823.6,415.5 823.8,424.3 824.1,408.6 824.3,419.1 824.6,419.1 824.9,415.7 825.1,413.9 825.4,421.7 825.6,413.6 825.9,413.7 826.2,424.1 826.4,421.8 826.7,413.7 826.9,412.1 827.2,409.7 827.5,414.8 827.7,431.3 828.0,420.5 828.2,419.6 828.5,413.5 828.7,417.1 829.0,419.9 829.3,423.3 829.5,416.2 829.8,409.0 830.0,415.5 830.3,414.2 830.6,426.1 830.8,418.3 831.1,414.5 831.3,412.6 831.6,427.3 831.8,430.2 832.1,415.3 832.4,414.5 832.6,412.9 832.9,415.0 833.1,412.1 833.4,417.4 833.7,406.4 833.9,413.6 834.2,417.2 834.4,418.0 834.7,410.5 834.9,410.6 835.2,408.5 835.5,426.8 835.7,416.8 836.0,414.6 836.2,417.9 836.5,420.2 836.8,411.6 837.0,420.2 837.3,409.7 837.5,418.7 837.8,415.4 838.0,415.0 838.3,412.0 838.6,417.4 838.8,413.5 839.1,412.4 839.3,410.3 839.6,416.3 839.9,413.1 840.1,419.6 840.4,409.0 840.6,413.5 840.9,422.2 841.1,411.7 841.4,419.6 841.7,416.2 841.9,416.4 842.2,409.4 842.4,415.8 842.7,415.7 843.0,413.2 843.2,412.7 843.5,414.8 843.7,413.8 844.0,424.5 844.2,412.8 844.5,412.3 844.8,413.2 845.0,411.5 845.3,414.7 845.5,410.9 845.8,414.7 846.1,415.3 846.3,423.4 846.6,411.2 846.8,403.2 847.1,417.1 847.3,415.3 847.6,411.0 847.9,421.7 848.1,421.7 848.4,426.3 848.6,411.3 848.9,409.5 849.2,422.6 849.4,413.0 849.7,410.3 849.9,414.3 850.2,408.5 850.4,417.8 850.7,408.9 851.0,429.5 851.2,417.7 851.5,415.2 851.7,423.6 852.0,418.1 852.3,413.3 852.5,415.4 852.8,413.9 853.0,413.4 853.3,414.0 853.5,410.0 853.8,418.5 854.1,413.7 854.3,408.4 854.6,411.4 854.8,403.7 855.1,412.6 855.4,420.2 855.6,416.3 855.9,425.1 856.1,416.6 856.4,415.2 856.7,420.8 856.9,421.1 857.2,422.4 857.4,412.4 857.7,421.9 857.9,414.3 858.2,412.2 858.5,414.0 858.7,418.7 859.0,418.7 859.2,414.0 859.5,413.3 859.8,412.7 860.0,409.9 860.3,414.7 860.5,419.2 860.8,415.1 861.0,413.6 861.3,412.9 861.6,419.4 861.8,413.0 862.1,413.4 862.3,412.5 862.6,417.3 862.9,413.5 863.1,417.6 863.4,414.8 863.6,409.0 863.9,414.1 864.1,411.9 864.4,412.0 864.7,410.4 864.9,414.6 865.2,418.7 865.4,415.5 865.7,414.4 866.0,415.3 866.2,415.6 866.5,417.5 866.7,416.7 867.0,415.0 867.2,414.8 867.5,418.1 867.8,419.2 868.0,418.0 868.3,416.6 868.5,417.7 868.8,414.8 869.1,415.7 869.3,417.7 869.6,413.2 869.8,413.8 870.1,415.4 870.3,415.5 870.6,414.8 870.9,414.6 871.1,414.8 871.4,415.9 871.6,418.1 871.9,413.7 872.2,420.6 872.4,413.8 872.7,415.4 872.9,416.1 873.2,415.9 873.4,413.2 873.7,413.2 874.0,414.0 874.2,417.7 874.5,414.1 874.7,413.2 875.0,415.1 875.3,416.4 875.5,416.5 875.8,414.2 876.0,415.4 876.3,416.0 876.5,413.4 876.8,415.6 877.1,418.9 877.3,417.2 877.6,414.4 877.8,413.8 878.1,414.7 878.4,415.0 878.6,414.5 878.9,414.9 879.1,414.8 879.4,415.6 879.6,414.9 879.9,415.4 880.2,417.6 880.4,419.3 880.7,417.7 880.9,415.2 881.2,416.8 881.5,415.9 881.7,417.2 882.0,414.4 882.2,416.0 882.5,416.9 882.7,414.2 883.0,418.9 883.3,415.7 883.5,414.0 883.8,417.3 884.0,417.9 884.3,416.2 884.6,414.4 884.8,414.7 885.1,414.3 885.3,413.3 885.6,415.3 885.9,415.9 886.1,417.4 886.4,414.8 886.6,414.9 886.9,416.2 887.1,414.0 887.4,415.5 887.7,415.5 887.9,415.2 888.2,415.2 888.4,414.4 888.7,415.0 889.0,414.4 889.2,415.7 889.5,416.2 889.7,416.8 890.0,416.4 890.2,415.3 890.5,415.3 890.8,415.1 891.0,414.8 891.3,415.0 891.5,416.3 891.8,416.0 892.1,415.3 892.3,415.5 892.6,417.8 892.8,415.3 893.1,414.9 893.3,416.2 893.6,415.0 893.9,415.0 894.1,416.3 894.4,415.2 894.6,418.4 894.9,416.1 895.2,415.8 895.4,416.9 895.7,416.0 895.9,415.5 896.2,415.3 896.4,415.0 896.7,413.6 897.0,415.8 897.2,416.1 897.5,416.7 897.7,415.4" fill="none" stroke="#f20d0d" stroke-width="1.100" stroke-linejoin="round"/><polyline points="690,489.4 700,489.4 700,486 715,486 715,489.4 727,489.4 740,489.4 754,489.4 754,480.5 755.7,480.5 755.7,469.8 761.8,469.8 761.8,483.3 771.8,483.3 771.8,490.4 796.7,490.4 796.7,486.9 807.4,486.9 807.4,484 813.8,484 813.8,487 819.8,487 819.8,474 828.7,474 828.7,480.5 847.3,480.5 847.3,490.4 866.1,490.4 866.1,484 875,484 875,476.9 887.5,476.9 887.5,489.4 898.2,489.4" fill="none" stroke="#cfcfcf" stroke-width="1.200"/></svg>
<div class="a" style="left:940.40px;top:54.40px;width:10.30px;height:444.20px;background:linear-gradient(90deg,#d2d2d2 0,#b4b4b4 25%,#b0b0b0 100%);border:1px solid #8c8c8c"></div>
<div class="a" style="left:940.40px;top:54.40px;width:10.30px;height:10.20px;background:#c6c6c6;border:1px solid #7e7e7e"></div>
<div class="a" style="left:940.40px;top:488.40px;width:10.30px;height:10.20px;background:#c6c6c6;border:1px solid #7e7e7e"></div>
<svg width="994" height="560"><path d="M943.400 61.400 L945.600 57.200 L947.800 61.400z M943.400 491.600 L945.600 495.800 L947.800 491.600z" fill="#111"/></svg>
<div class="a" style="left:264.60px;top:499.20px;width:675.80px;height:10.20px;background:linear-gradient(180deg,#bdbdbd 0,#ababab 30%,#a8a8a8 100%);border:1px solid #7c7c7c"></div>
<div class="a" style="left:264.60px;top:499.20px;width:11.20px;height:10.20px;border:1px solid #787878;background:#a8a8a8"></div>
<div class="a" style="left:929.20px;top:499.20px;width:11.20px;height:10.20px;border:1px solid #787878;background:#a8a8a8"></div>
<svg width="994" height="560"><path d="M314.0 512.800 V515.600 M365.7 512.800 V515.600 M417.4 512.800 V515.600 M469.0 512.800 V515.600 M520.7 512.800 V515.600 M572.4 512.800 V515.600 M624.1 512.800 V515.600 M675.8 512.800 V515.600 M727.4 512.800 V515.600 M779.1 512.800 V515.600 M830.8 512.800 V515.600 M882.5 512.800 V515.600 M934.2 512.800 V515.600" stroke="#555" stroke-width="1"/></svg>
<span class="t" style="left:303.40px;top:517.88px;font-size:8.2px;color:#4a4a4a;letter-spacing:0.140px;">00:00</span>
<span class="t" style="left:355.08px;top:517.88px;font-size:8.2px;color:#4a4a4a;letter-spacing:0.140px;">00:10</span>
<span class="t" style="left:406.76px;top:517.88px;font-size:8.2px;color:#4a4a4a;letter-spacing:0.140px;">00:20</span>
<span class="t" style="left:458.44px;top:517.88px;font-size:8.2px;color:#4a4a4a;letter-spacing:0.140px;">00:30</span>
<span class="t" style="left:510.12px;top:517.88px;font-size:8.2px;color:#4a4a4a;letter-spacing:0.140px;">00:40</span>
<span class="t" style="left:561.80px;top:517.88px;font-size:8.2px;color:#4a4a4a;letter-spacing:0.140px;">00:50</span>
<span class="t" style="left:613.49px;top:517.88px;font-size:8.2px;color:#4a4a4a;letter-spacing:0.140px;">01:00</span>
<span class="t" style="left:665.17px;top:517.88px;font-size:8.2px;color:#4a4a4a;letter-spacing:0.140px;">01:10</span>
<span class="t" style="left:716.85px;top:517.88px;font-size:8.2px;color:#4a4a4a;letter-spacing:0.140px;">01:20</span>
<span class="t" style="left:768.53px;top:517.88px;font-size:8.2px;color:#4a4a4a;letter-spacing:0.140px;">01:30</span>
<span class="t" style="left:820.21px;top:517.88px;font-size:8.2px;color:#4a4a4a;letter-spacing:0.140px;">01:40</span>
<span class="t" style="left:871.89px;top:517.88px;font-size:8.2px;color:#4a4a4a;letter-spacing:0.140px;">01:50</span>
<span class="t" style="left:923.57px;top:517.88px;font-size:8.2px;color:#4a4a4a;letter-spacing:0.140px;">02:00</span>
<span class="t" style="left:613.90px;top:528.39px;font-size:9.4px;color:#2a2a2a;letter-spacing:0.229px;">Time</span>
<div class="a" style="left:250.40px;top:541.00px;width:717.20px;height:1.20px;background:#c4c4c4"></div>
<div class="a" style="left:250.40px;top:542.20px;width:717.20px;height:14.00px;background:linear-gradient(180deg,#fff,#f4f4f4)"></div>
<span class="t" style="left:254.40px;top:545.69px;font-size:9.4px;color:#262a36;letter-spacing:0.084px;">Profile: Madone 9 1/3/17; rec rate = 1 s</span>
<svg width="994" height="560"><path d="M958.600 554.600 L966.600 546.600 M961.600 554.600 L966.600 549.600 M964.400 554.600 L966.600 552.400" stroke="#9a9a9a" stroke-width=".7"/></svg>
<div class="a" style="left:77.80px;top:26.00px;width:649.80px;height:472.20px;background:#ececec;border-radius:4.5px 4.5px 0 0;box-shadow:0 0 1px rgba(0,0,0,.55),0 9px 14px rgba(0,0,0,.42),0 2px 22px rgba(0,0,0,.34)"><div class="a pin" style="inset:0"></div></div>
<div class="a" style="left:77.80px;top:26.00px;width:649.80px;height:14.60px;background:linear-gradient(180deg,#ececec,#d6d6d6);border-radius:4.5px 4.5px 0 0;border-bottom:1px solid #b9b9b9;box-shadow:inset 0 1px 0 #f6f6f6"></div>
<div class="a" style="left:83.40px;top:29.20px;width:8.20px;height:8.20px;border-radius:50%;background:#ee6a5f;border:.6px solid #d8554b"></div>
<div class="a" style="left:97.20px;top:29.20px;width:8.20px;height:8.20px;border-radius:50%;background:#d4d4d4;border:.6px solid #c4c4c4"></div>
<div class="a" style="left:110.90px;top:29.20px;width:8.20px;height:8.20px;border-radius:50%;background:#5cc453;border:.6px solid #48ac40"></div>
<span class="t" style="left:257.00px;top:28.79px;font-size:9.4px;color:#4c4c4c;letter-spacing:-0.022px;">Power Meter Comparison:  iBike_03_05_2017_0602_51_km_HiDef.ibr</span>
<div class="a" style="left:86.00px;top:51.20px;width:39.50px;height:14.20px;background:linear-gradient(180deg,#d0e2f8 0,#a2c6f2 46%,#80b2ee 54%,#aad2fb 100%);border:1px solid #4d76c4;border-bottom:none;border-radius:3px 3px 0 0"></div>
<div class="a" style="left:125.40px;top:51.40px;width:36.20px;height:14.00px;background:linear-gradient(180deg,#fdfdfd,#ececec);border:1px solid #b4b4b4;border-bottom:none;border-radius:3px 3px 0 0"></div>
<span class="t" style="left:93.40px;top:53.49px;font-size:9.4px;color:#1c2333;letter-spacing:-0.013px;">Graph</span>
<span class="t" style="left:133.00px;top:53.49px;font-size:9.4px;color:#2b2b2b;letter-spacing:-0.075px;">Stats</span>
<div class="a" style="left:86.00px;top:65.30px;width:628.30px;height:1.10px;background:#4f79c6"></div>
<div class="a" style="left:86.00px;top:66.40px;width:628.30px;height:3.90px;background:linear-gradient(180deg,#8db8ee 0,#c2dcf8 45%,#a5c8f2 100%)"></div>
<div class="a" style="left:420.00px;top:46.80px;width:48.40px;height:12.60px;background:#fff;border:1px solid #c4c4c4;box-shadow:inset 0 1px 1px rgba(0,0,0,.08)"></div>
<span class="t" style="left:423.00px;top:48.79px;font-size:9px;color:#262626;letter-spacing:0.138px;">0:00:10</span>
<div class="a" style="left:473.80px;top:46.40px;width:15.20px;height:14.00px;background:linear-gradient(180deg,#fff,#f4f4f4);border:1px solid #bcbcbc;border-radius:3.500px"></div>
<svg width="994" height="560"><path d="M479.200 51.600 L481.400 49.400 L483.600 51.600 M479.200 55.200 L481.400 57.400 L483.600 55.200" fill="none" stroke="#333" stroke-width="1" stroke-linecap="round" stroke-linejoin="round"/></svg>
<div class="sel" style="left:495.00px;top:46.00px;width:49.00px;height:13.90px"><i style="width:12.60px"></i></div>
<svg width="994" height="560"><path d="M535.70 51.45 L538.00 49.25 L540.30 51.45 M535.70 54.45 L538.00 56.65 L540.30 54.45" fill="none" stroke="#fff" stroke-width="1.2" stroke-linecap="round" stroke-linejoin="round"/></svg>
<span class="t" style="left:498.60px;top:48.74px;font-size:9px;color:#262626;">metric</span>
<div class="sel" style="left:551.30px;top:46.00px;width:41.60px;height:13.90px"><i style="width:12.60px"></i></div>
<svg width="994" height="560"><path d="M584.60 51.45 L586.90 49.25 L589.20 51.45 M584.60 54.45 L586.90 56.65 L589.20 54.45" fill="none" stroke="#fff" stroke-width="1.2" stroke-linecap="round" stroke-linejoin="round"/></svg>
<span class="t" style="left:554.90px;top:48.74px;font-size:9px;color:#262626;letter-spacing:0.121px;">time</span>
<div class="sel" style="left:600.10px;top:46.00px;width:71.70px;height:13.90px"><i style="width:12.60px"></i></div>
<svg width="994" height="560"><path d="M663.50 51.45 L665.80 49.25 L668.10 51.45 M663.50 54.45 L665.80 56.65 L668.10 54.45" fill="none" stroke="#fff" stroke-width="1.2" stroke-linecap="round" stroke-linejoin="round"/></svg>
<span class="t" style="left:603.70px;top:48.74px;font-size:9px;color:#262626;letter-spacing:-0.257px;">Full Ride</span>
<div class="btn" style="left:678.00px;top:45.40px;width:37.70px;height:15.40px"></div>
<span class="t" style="left:681.70px;top:49.29px;font-size:9px;color:#262626;letter-spacing:-0.246px;">Fit Plots</span>
<div class="a" style="left:86.00px;top:70.30px;width:628.30px;height:324.30px;background:#fafafa"></div>
<div class="a" style="left:86.00px;top:70.30px;width:9.50px;height:324.30px;background:linear-gradient(90deg,#dadada 0,#f0f0f0 55%,#ffffff 100%);clip-path:polygon(0 0,100% 0,100% calc(100% - 5px),0 100%)"></div>
<div class="a" style="left:696.00px;top:74.00px;width:15.10px;height:320.40px;background:linear-gradient(90deg,#ffffff 0,#fdfdfd 32%,#e4e4e4 62%,#a9a9a9 100%);clip-path:polygon(0 8px,100% 0,100% 100%,0 calc(100% - 4px))"></div>
<div class="a" style="left:711.10px;top:70.30px;width:3.20px;height:324.30px;background:#f1f1f1"></div>
<div class="a" style="left:86.00px;top:390.40px;width:628.30px;height:4.20px;background:linear-gradient(180deg,#ffffff,#d8d8d8)"></div>
<div class="a" style="left:86.00px;top:394.40px;width:628.30px;height:1.20px;background:#bcbcbc"></div>
<div class="a" style="left:86.00px;top:70.30px;width:628.30px;height:3.70px;background:#f3f3f3"></div>
<div class="a" style="left:95.50px;top:74.00px;width:601.00px;height:8.20px;background:#ffffff"></div>
<div class="a" style="left:107.20px;top:81.70px;width:588.80px;height:278.50px;background:#f6f6f6;border:1px solid #d0d0d0;border-right:none"></div>
<svg width="994" height="560"><rect x="140.8" y="89.5" width="536.4" height="120.7" fill="#000"/><rect x="140.8" y="216.2" width="536.4" height="59.1" fill="#000"/><rect x="140.8" y="282.4" width="536.4" height="59.6" fill="#000"/><path d="M140.8 194.7 H677.2 M140.8 179.7 H677.2 M140.8 164.8 H677.2 M140.8 149.8 H677.2 M140.8 134.9 H677.2 M140.8 120.0 H677.2 M140.8 105.0 H677.2 M140.8 255.6 H677.2 M140.8 235.9 H677.2 M140.8 329.7 H677.2 M140.8 318.0 H677.2 M140.8 306.4 H677.2 M140.8 294.7 H677.2 M185.7 89.5 V210.2 M230.3 89.5 V210.2 M275.0 89.5 V210.2 M319.7 89.5 V210.2 M364.4 89.5 V210.2 M409.0 89.5 V210.2 M453.7 89.5 V210.2 M498.4 89.5 V210.2 M543.0 89.5 V210.2 M587.7 89.5 V210.2 M632.4 89.5 V210.2 M185.7 216.2 V275.3 M230.3 216.2 V275.3 M275.0 216.2 V275.3 M319.7 216.2 V275.3 M364.4 216.2 V275.3 M409.0 216.2 V275.3 M453.7 216.2 V275.3 M498.4 216.2 V275.3 M543.0 216.2 V275.3 M587.7 216.2 V275.3 M632.4 216.2 V275.3 M185.7 282.4 V342.0 M230.3 282.4 V342.0 M275.0 282.4 V342.0 M319.7 282.4 V342.0 M364.4 282.4 V342.0 M409.0 282.4 V342.0 M453.7 282.4 V342.0 M498.4 282.4 V342.0 M543.0 282.4 V342.0 M587.7 282.4 V342.0 M632.4 282.4 V342.0" stroke="#5e5e5e" stroke-width="1" fill="none"/><polyline points="141.0,210.1 142.1,210.1 143.2,196.8 144.4,208.4 145.5,208.3 146.6,210.1 147.7,194.7 148.8,210.1 149.9,192.9 151.1,197.9 152.2,187.4 153.3,199.4 154.4,189.3 155.5,186.3 156.6,204.1 157.8,210.1 158.9,204.9 160.0,197.4 161.1,197.3 162.2,197.5 163.3,191.1 164.5,198.4 165.6,187.4 166.7,186.0 167.8,194.6 168.9,193.7 170.0,190.9 171.2,206.7 172.3,192.3 173.4,197.4 174.5,200.0 175.6,201.7 176.7,210.1 177.9,210.1 179.0,210.1 180.1,185.8 181.2,185.9 182.3,186.4 183.4,194.9 184.6,179.2 185.7,199.4 186.8,206.2 187.9,193.9 189.0,189.0 190.1,190.3 191.3,210.1 192.4,185.2 193.5,187.8 194.6,188.2 195.7,193.1 196.8,192.7 198.0,191.4 199.1,198.9 200.2,188.6 201.3,210.1 202.4,189.1 203.5,202.5 204.7,191.8 205.8,190.7 206.9,206.5 208.0,191.2 209.1,171.3 210.2,166.2 211.4,159.9 212.5,164.1 213.6,156.3 214.7,153.8 215.8,180.7 216.9,192.5 218.1,194.3 219.2,172.2 220.3,170.2 221.4,168.4 222.5,129.8 223.6,169.4 224.8,165.6 225.9,187.4 227.0,181.8 228.1,195.7 229.2,186.2 230.3,160.8 231.5,208.3 232.6,176.2 233.7,167.9 234.8,127.8 235.9,166.2 237.0,179.0 238.2,183.7 239.3,183.5 240.4,194.4 241.5,174.4 242.6,180.8 243.7,181.7 244.9,189.9 246.0,201.6 247.1,208.0 248.2,206.4 249.3,186.0 250.4,187.7 251.6,187.2 252.7,185.8 253.8,198.4 254.9,188.3 256.0,210.1 257.1,188.3 258.3,210.1 259.4,197.3 260.5,205.1 261.6,198.0 262.7,202.7 263.8,199.2 265.0,210.0 266.1,204.6 267.2,197.6 268.3,188.8 269.4,185.7 270.5,194.9 271.7,178.9 272.8,181.0 273.9,194.0 275.0,210.1 276.1,210.1 277.2,190.1 278.4,173.9 279.5,183.9 280.6,182.0 281.7,183.8 282.8,197.6 283.9,180.0 285.1,173.6 286.2,183.5 287.3,201.3 288.4,177.6 289.5,178.4 290.6,187.6 291.8,165.5 292.9,173.7 294.0,181.2 295.1,179.7 296.2,181.6 297.3,169.5 298.5,166.0 299.6,210.1 300.7,184.3 301.8,210.1 302.9,210.1 304.0,210.1 305.2,151.6 306.3,146.1 307.4,168.8 308.5,172.1 309.6,210.1 310.7,170.4 311.9,158.0 313.0,139.4 314.1,150.3 315.2,187.6 316.3,161.7 317.4,183.0 318.6,162.7 319.7,210.1 320.8,149.6 321.9,147.2 323.0,164.2 324.1,164.2 325.3,154.5 326.4,157.0 327.5,152.9 328.6,150.9 329.7,210.1 330.8,153.8 332.0,161.9 333.1,170.4 334.2,210.1 335.3,210.1 336.4,162.2 337.5,183.6 338.7,210.1 339.8,178.5 340.9,189.6 342.0,167.2 343.1,190.7 344.2,187.3 345.4,210.1 346.5,190.4 347.6,197.2 348.7,175.7 349.8,173.6 350.9,210.1 352.1,189.9 353.2,168.0 354.3,183.9 355.4,192.3 356.5,183.7 357.6,176.6 358.8,210.1 359.9,167.0 361.0,180.5 362.1,210.1 363.2,171.4 364.4,144.7 365.5,178.7 366.6,184.2 367.7,160.3 368.8,210.1 369.9,210.1 371.1,185.8 372.2,206.6 373.3,210.1 374.4,210.1 375.5,210.1 376.6,181.6 377.8,210.1 378.9,210.1 380.0,210.1 381.1,210.1 382.2,210.1 383.3,210.1 384.5,210.1 385.6,210.1 386.7,210.1 387.8,210.1 388.9,210.1 390.0,210.1 391.2,210.1 392.3,210.1 393.4,210.1 394.5,210.1 395.6,210.1 396.7,210.1 397.9,210.1 399.0,210.1 400.1,210.1 401.2,210.1 402.3,210.1 403.4,210.1 404.6,210.1 405.7,210.1 406.8,210.1 407.9,210.1 409.0,210.1 410.1,210.1 411.3,210.1 412.4,210.1 413.5,210.1 414.6,210.1 415.7,210.1 416.8,210.1 418.0,210.1 419.1,210.1 420.2,210.1 421.3,210.1 422.4,210.1 423.5,210.1 424.7,210.1 425.8,210.1 426.9,210.1 428.0,210.1 429.1,210.1 430.2,210.1 431.4,210.1 432.5,210.1 433.6,210.1 434.7,210.1 435.8,210.1 436.9,210.1 438.1,210.1 439.2,210.1 440.3,210.1 441.4,210.1 442.5,210.1 443.6,210.1 444.8,210.1 445.9,210.1 447.0,210.1 448.1,210.1 449.2,210.1 450.3,210.1 451.5,210.1 452.6,210.1 453.7,210.1 454.8,210.1 455.9,210.1 457.0,210.1 458.2,210.1 459.3,210.1 460.4,210.1 461.5,210.1 462.6,210.1 463.7,210.1 464.9,210.1 466.0,210.1 467.1,210.1 468.2,210.1 469.3,210.1 470.4,210.1 471.6,210.1 472.7,210.1 473.8,210.1 474.9,210.1 476.0,210.1 477.1,210.1 478.3,210.1 479.4,210.1 480.5,210.1 481.6,210.1 482.7,210.1 483.8,210.1 485.0,210.1 486.1,210.1 487.2,210.1 488.3,210.1 489.4,210.1 490.5,210.1 491.7,210.1 492.8,210.1 493.9,210.1 495.0,210.1 496.1,210.1 497.2,210.1 498.4,210.1 499.5,210.1 500.6,210.1 501.7,210.1 502.8,210.1 503.9,210.1 505.1,210.1 506.2,210.1 507.3,210.1 508.4,210.1 509.5,210.1 510.6,210.1 511.8,210.1 512.9,210.1 514.0,210.1 515.1,210.1 516.2,210.1 517.3,210.1 518.5,210.1 519.6,210.1 520.7,210.1 521.8,210.1 522.9,210.1 524.0,210.1 525.2,210.1 526.3,210.1 527.4,210.1 528.5,210.1 529.6,210.1 530.7,210.1 531.9,210.1 533.0,210.1 534.1,210.1 535.2,210.1 536.3,210.1 537.4,210.1 538.6,210.1 539.7,210.1 540.8,210.1 541.9,210.1 543.0,210.1 544.1,210.1 545.3,210.1 546.4,210.1 547.5,210.1 548.6,210.1 549.7,210.1 550.8,210.1 552.0,210.1 553.1,210.1 554.2,210.1 555.3,210.1 556.4,210.1 557.5,210.1 558.7,210.1 559.8,210.1 560.9,210.1 562.0,210.1 563.1,210.1 564.2,210.1 565.4,210.1 566.5,210.1 567.6,210.1 568.7,210.1 569.8,210.1 570.9,210.1 572.1,210.1 573.2,210.1 574.3,210.1 575.4,210.1 576.5,210.1 577.6,210.1 578.8,210.1 579.9,210.1 581.0,210.1 582.1,210.1 583.2,210.1 584.3,210.1 585.5,210.1 586.6,210.1 587.7,210.1 588.8,210.1 589.9,210.1 591.1,210.1 592.2,210.1 593.3,210.1 594.4,210.1 595.5,210.1 596.6,210.1 597.8,210.1 598.9,210.1 600.0,210.1 601.1,200.4 602.2,196.9 603.3,206.8 604.5,194.8 605.6,210.1 606.7,210.1 607.8,210.1 608.9,156.0 610.0,151.5 611.2,183.4 612.3,159.7 613.4,99.5 614.5,149.6 615.6,198.2 616.7,210.1 617.9,157.1 619.0,116.2 620.1,161.3 621.2,210.1 622.3,180.3 623.4,161.9 624.6,210.1 625.7,149.1 626.8,210.1 627.9,177.5 629.0,152.6 630.1,176.7 631.3,170.8 632.4,172.1 633.5,210.1 634.6,194.5 635.7,210.1 636.8,186.2 638.0,200.6 639.1,210.1 640.2,206.0 641.3,205.2 642.4,206.9 643.5,205.7 644.7,207.6 645.8,210.1" fill="none" stroke="#22d322" stroke-width="1.600" stroke-linejoin="round"/><polyline points="141.0,208.5 142.1,207.7 143.2,195.5 144.4,204.4 145.5,204.1 146.6,209.4 147.7,190.5 148.8,209.2 149.9,190.6 151.1,196.6 152.2,180.6 153.3,194.7 154.4,182.9 155.5,183.0 156.6,202.8 157.8,208.4 158.9,199.6 160.0,190.0 161.1,189.9 162.2,193.8 163.3,184.2 164.5,193.6 165.6,174.8 166.7,179.0 167.8,188.0 168.9,188.5 170.0,187.0 171.2,203.7 172.3,182.6 173.4,189.3 174.5,197.3 175.6,197.9 176.7,207.6 177.9,209.6 179.0,208.4 180.1,183.1 181.2,183.5 182.3,179.0 183.4,190.3 184.6,168.2 185.7,191.5 186.8,201.7 187.9,191.7 189.0,185.9 190.1,189.0 191.3,207.7 192.4,181.7 193.5,184.3 194.6,179.2 195.7,188.1 196.8,187.7 198.0,179.5 199.1,194.8 200.2,182.6 201.3,208.6 202.4,183.8 203.5,200.1 204.7,193.4 205.8,183.3 206.9,205.8 208.0,182.8 209.1,164.8 210.2,163.3 211.4,161.8 212.5,166.6 213.6,159.7 214.7,159.2 215.8,180.2 216.9,188.1 218.1,189.8 219.2,168.4 220.3,167.9 221.4,167.0 222.5,124.4 223.6,162.8 224.8,163.3 225.9,183.3 227.0,174.1 228.1,194.5 229.2,184.1 230.3,158.8 231.5,206.5 232.6,175.9 233.7,165.9 234.8,122.2 235.9,157.9 237.0,167.8 238.2,171.7 239.3,171.7 240.4,191.3 241.5,164.5 242.6,171.3 243.7,177.4 244.9,186.9 246.0,199.8 247.1,204.1 248.2,205.2 249.3,184.5 250.4,184.0 251.6,183.3 252.7,181.8 253.8,189.4 254.9,181.9 256.0,208.0 257.1,179.4 258.3,209.0 259.4,189.9 260.5,200.0 261.6,195.0 262.7,196.4 263.8,195.5 265.0,206.4 266.1,200.1 267.2,191.7 268.3,179.7 269.4,186.7 270.5,192.8 271.7,177.5 272.8,176.7 273.9,188.3 275.0,209.0 276.1,208.7 277.2,183.3 278.4,171.3 279.5,176.2 280.6,169.8 281.7,175.5 282.8,190.5 283.9,172.4 285.1,164.2 286.2,174.4 287.3,199.6 288.4,173.5 289.5,177.0 290.6,186.3 291.8,169.3 292.9,171.1 294.0,180.8 295.1,176.9 296.2,168.6 297.3,153.6 298.5,151.9 299.6,208.3 300.7,173.9 301.8,208.6 302.9,208.2 304.0,208.2 305.2,148.7 306.3,143.9 307.4,170.2 308.5,170.5 309.6,208.8 310.7,172.0 311.9,157.5 313.0,143.9 314.1,150.1 315.2,181.2 316.3,161.4 317.4,179.6 318.6,162.3 319.7,209.3 320.8,147.9 321.9,145.4 323.0,163.4 324.1,164.4 325.3,153.2 326.4,154.8 327.5,155.5 328.6,156.8 329.7,209.4 330.8,156.2 332.0,160.0 333.1,160.1 334.2,207.9 335.3,207.9 336.4,154.7 337.5,178.3 338.7,208.4 339.8,169.1 340.9,184.9 342.0,160.3 343.1,182.5 344.2,178.7 345.4,208.6 346.5,186.1 347.6,192.8 348.7,166.1 349.8,166.8 350.9,208.9 352.1,184.2 353.2,158.8 354.3,174.2 355.4,186.2 356.5,177.2 357.6,168.0 358.8,209.2 359.9,160.0 361.0,168.6 362.1,208.0 363.2,159.3 364.4,134.9 365.5,168.5 366.6,175.0 367.7,150.3 368.8,208.6 369.9,208.8 371.1,185.5 372.2,203.9 373.3,208.9 374.4,205.5 375.5,208.5 376.6,173.6 377.8,208.0 378.9,172.2 380.0,134.9 381.1,168.5 382.2,209.3 383.3,144.1 384.5,145.6 385.6,185.6 386.7,190.6 387.8,209.5 388.9,180.3 390.0,152.9 391.2,207.9 392.3,162.7 393.4,157.3 394.5,156.3 395.6,182.1 396.7,186.4 397.9,177.0 399.0,165.9 400.1,209.0 401.2,172.1 402.3,175.8 403.4,174.3 404.6,171.4 405.7,209.2 406.8,180.9 407.9,155.0 409.0,193.6 410.1,155.0 411.3,154.3 412.4,179.2 413.5,168.9 414.6,209.2 415.7,209.2 416.8,180.8 418.0,187.1 419.1,159.8 420.2,204.0 421.3,208.4 422.4,208.9 423.5,178.6 424.7,147.6 425.8,164.6 426.9,208.7 428.0,181.4 429.1,178.3 430.2,180.9 431.4,180.2 432.5,193.3 433.6,207.0 434.7,196.3 435.8,197.1 436.9,177.9 438.1,146.1 439.2,174.7 440.3,200.3 441.4,202.7 442.5,208.8 443.6,155.0 444.8,149.8 445.9,165.0 447.0,179.3 448.1,168.8 449.2,186.9 450.3,176.7 451.5,194.3 452.6,176.1 453.7,209.4 454.8,187.4 455.9,189.6 457.0,180.1 458.2,150.6 459.3,177.1 460.4,172.4 461.5,208.2 462.6,156.1 463.7,165.4 464.9,148.3 466.0,175.9 467.1,208.1 468.2,209.2 469.3,162.1 470.4,208.0 471.6,171.1 472.7,209.1 473.8,153.5 474.9,209.5 476.0,209.2 477.1,146.1 478.3,158.8 479.4,181.7 480.5,161.4 481.6,167.4 482.7,152.3 483.8,182.7 485.0,155.8 486.1,166.4 487.2,208.0 488.3,185.0 489.4,209.5 490.5,168.3 491.7,173.3 492.8,208.6 493.9,175.1 495.0,178.1 496.1,175.9 497.2,164.6 498.4,125.9 499.5,163.6 500.6,191.9 501.7,204.6 502.8,173.2 503.9,209.0 505.1,184.7 506.2,207.9 507.3,166.2 508.4,170.3 509.5,158.1 510.6,157.5 511.8,157.3 512.9,180.8 514.0,161.1 515.1,180.2 516.2,208.8 517.3,152.9 518.5,151.5 519.6,157.8 520.7,148.8 521.8,147.1 522.9,145.6 524.0,144.1 525.2,128.9 526.3,165.2 527.4,157.5 528.5,209.2 529.6,207.9 530.7,164.9 531.9,208.4 533.0,167.4 534.1,170.3 535.2,209.2 536.3,208.8 537.4,168.4 538.6,209.0 539.7,161.5 540.8,200.1 541.9,184.9 543.0,160.3 544.1,182.5 545.3,192.8 546.4,177.2 547.5,183.2 548.6,196.3 549.7,186.6 550.8,185.9 552.0,192.2 553.1,175.7 554.2,161.8 555.3,183.3 556.4,181.3 557.5,167.2 558.7,179.8 559.8,160.7 560.9,159.4 562.0,209.4 563.1,158.1 564.2,163.3 565.4,134.9 566.5,156.3 567.6,155.6 568.7,155.0 569.8,190.6 570.9,209.5 572.1,156.2 573.2,154.5 574.3,148.5 575.4,183.5 576.5,208.7 577.6,146.7 578.8,156.5 579.9,145.4 581.0,174.3 582.1,168.7 583.2,205.9 584.3,176.9 585.5,206.0 586.6,208.8 587.7,208.4 588.8,208.8 589.9,208.6 591.1,208.4 592.2,208.3 593.3,208.8 594.4,209.1 595.5,208.3 596.6,209.0 597.8,209.6 598.9,208.8 600.0,209.2 601.1,194.5 602.2,192.4 603.3,200.8 604.5,186.8 605.6,207.7 606.7,207.4 607.8,209.5 608.9,157.0 610.0,149.3 611.2,179.3 612.3,154.7 613.4,99.8 614.5,149.2 615.6,196.2 616.7,206.0 617.9,160.7 619.0,111.7 620.1,155.8 621.2,208.2 622.3,177.0 623.4,151.4 624.6,209.1 625.7,141.2 626.8,208.9 627.9,166.4 629.0,134.9 630.1,168.5 631.3,172.1 632.4,169.1 633.5,208.3 634.6,191.2 635.7,208.7 636.8,184.1 638.0,194.9 639.1,209.4 640.2,202.5 641.3,205.8 642.4,200.2 643.5,203.9 644.7,202.7 645.8,209.6" fill="none" stroke="#ececec" stroke-width="1.600" stroke-linejoin="round"/><polyline points="141.0,272.7 141.9,265.7 142.8,251.6 143.7,247.0 144.6,249.6 145.5,248.2 146.4,243.0 147.3,247.1 148.1,253.7 149.0,250.8 149.9,247.1 150.8,254.7 151.7,251.9 152.6,267.4 153.5,258.3 154.4,254.9 155.3,255.3 156.2,254.8 157.1,267.7 158.0,262.8 158.9,245.5 159.8,250.0 160.7,248.5 161.5,252.1 162.4,241.3 163.3,245.3 164.2,250.6 165.1,245.6 166.0,242.9 166.9,251.3 167.8,254.8 168.7,246.1 169.6,259.4 170.5,253.4 171.4,247.0 172.3,259.2 173.2,265.9 174.1,262.9 174.9,250.8 175.8,246.6 176.7,245.5 177.6,249.4 178.5,248.4 179.4,255.2 180.3,241.9 181.2,247.6 182.1,248.4 183.0,242.2 183.9,245.2 184.8,252.0 185.7,254.5 186.6,249.3 187.5,250.8 188.4,247.4 189.2,245.3 190.1,243.9 191.0,247.8 191.9,244.6 192.8,243.4 193.7,242.1 194.6,247.4 195.5,246.3 196.4,248.2 197.3,249.7 198.2,242.2 199.1,241.4 200.0,247.8 200.9,248.3 201.8,253.8 202.6,258.8 203.5,257.2 204.4,255.4 205.3,264.3 206.2,261.1 207.1,275.2 208.0,255.5 208.9,251.2 209.8,249.2 210.7,254.2 211.6,252.4 212.5,244.7 213.4,241.1 214.3,233.5 215.2,238.0 216.0,237.8 216.9,237.1 217.8,234.0 218.7,234.8 219.6,237.2 220.5,232.7 221.4,235.5 222.3,232.8 223.2,238.8 224.1,238.1 225.0,239.1 225.9,235.0 226.8,237.2 227.7,237.7 228.6,237.5 229.4,235.9 230.3,236.2 231.2,232.5 232.1,229.2 233.0,233.2 233.9,233.0 234.8,234.3 235.7,238.1 236.6,235.3 237.5,235.1 238.4,236.5 239.3,240.4 240.2,233.1 241.1,231.4 242.0,224.2 242.8,234.6 243.7,234.3 244.6,235.7 245.5,244.6 246.4,245.9 247.3,252.1 248.2,250.3 249.1,254.9 250.0,245.7 250.9,254.0 251.8,246.0 252.7,240.6 253.6,250.5 254.5,249.3 255.4,246.4 256.2,248.5 257.1,253.1 258.0,246.7 258.9,250.7 259.8,245.2 260.7,258.1 261.6,234.8 262.5,259.3 263.4,252.0 264.3,247.7 265.2,254.9 266.1,248.2 267.0,247.9 267.9,257.3 268.8,253.9 269.6,253.9 270.5,255.2 271.4,256.9 272.3,268.0 273.2,263.7 274.1,261.0 275.0,257.4 275.9,262.2 276.8,256.4 277.7,253.9 278.6,255.2 279.5,260.1 280.4,251.9 281.3,255.9 282.2,261.5 283.1,256.5 283.9,262.7 284.8,257.8 285.7,257.9 286.6,264.4 287.5,257.5 288.4,257.4 289.3,256.1 290.2,242.1 291.1,255.6 292.0,254.0 292.9,252.5 293.8,249.5 294.7,244.6 295.6,244.5 296.5,247.7 297.3,247.9 298.2,242.5 299.1,243.5 300.0,246.6 300.9,233.7 301.8,246.7 302.7,240.9 303.6,242.8 304.5,240.6 305.4,246.5 306.3,246.0 307.2,243.4 308.1,237.7 309.0,222.8 309.9,233.4 310.7,236.3 311.6,241.6 312.5,250.9 313.4,257.0 314.3,252.4 315.2,243.3 316.1,255.8 317.0,252.4 317.9,253.4 318.8,253.8 319.7,244.9 320.6,240.6 321.5,234.1 322.4,234.6 323.3,245.6 324.1,240.0 325.0,245.8 325.9,246.1 326.8,246.8 327.7,235.9 328.6,238.8 329.5,243.0 330.4,241.2 331.3,239.6 332.2,241.4 333.1,235.7 334.0,238.2 334.9,232.9 335.8,233.8 336.7,235.2 337.5,231.3 338.4,249.5 339.3,244.6 340.2,253.0 341.1,249.6 342.0,251.7 342.9,256.9 343.8,254.3 344.7,253.3 345.6,248.6 346.5,253.0 347.4,251.3 348.3,252.6 349.2,255.0 350.1,245.6 350.9,250.2 351.8,259.6 352.7,251.8 353.6,255.1 354.5,250.3 355.4,256.7 356.3,262.0 357.2,253.6 358.1,251.8 359.0,266.1 359.9,252.2 360.8,258.8 361.7,241.1 362.6,240.3 363.5,241.3 364.4,243.5 365.2,231.8 366.1,227.2 367.0,235.1 367.9,246.2 368.8,253.2 369.7,238.1 370.6,244.8 371.5,232.4 372.4,228.8 373.3,241.3 374.2,228.6 375.1,245.2 376.0,235.2 376.9,229.7 377.8,230.4 378.6,227.6 379.5,244.5 380.4,247.6 381.3,246.8 382.2,245.7 383.1,257.4 384.0,252.5 384.9,265.3 385.8,261.7 386.7,258.2 387.6,267.4 388.5,261.7 389.4,255.9 390.3,255.0 391.2,249.4 392.0,245.8 392.9,248.7 393.8,250.5 394.7,238.0 395.6,250.5 396.5,242.1 397.4,237.2 398.3,238.2 399.2,243.7 400.1,244.1 401.0,238.3 401.9,246.8 402.8,232.4 403.7,237.8 404.6,228.1 405.4,224.8 406.3,229.9 407.2,233.1 408.1,238.4 409.0,246.4 409.9,246.0 410.8,241.7 411.7,243.6 412.6,247.9 413.5,250.8 414.4,248.1 415.3,254.7 416.2,249.5 417.1,252.7 418.0,261.3 418.8,249.0 419.7,247.6 420.6,237.1 421.5,242.4 422.4,246.7 423.3,246.2 424.2,249.5 425.1,254.5 426.0,249.3 426.9,250.0 427.8,240.7 428.7,252.3 429.6,241.2 430.5,251.1 431.4,251.2 432.2,240.5 433.1,238.6 434.0,236.8 434.9,235.1 435.8,235.5 436.7,240.1 437.6,239.2 438.5,243.6 439.4,241.1 440.3,246.2 441.2,244.8 442.1,239.5 443.0,233.9 443.9,235.8 444.8,233.1 445.6,231.5 446.5,231.6 447.4,245.0 448.3,239.7 449.2,240.9 450.1,246.5 451.0,247.8 451.9,246.6 452.8,246.7 453.7,246.0 454.6,243.3 455.5,246.5 456.4,250.1 457.3,250.8 458.2,254.9 459.1,258.3 459.9,247.5 460.8,244.2 461.7,245.6 462.6,239.2 463.5,225.1 464.4,237.4 465.3,235.5 466.2,233.5 467.1,237.3 468.0,238.3 468.9,241.9 469.8,243.0 470.7,247.1 471.6,246.2 472.5,245.3 473.3,243.0 474.2,247.1 475.1,243.9 476.0,254.1 476.9,246.2 477.8,238.4 478.7,239.2 479.6,248.6 480.5,248.8 481.4,237.0 482.3,238.6 483.2,238.5 484.1,236.6 485.0,224.3 485.9,232.0 486.7,228.8 487.6,231.9 488.5,239.3 489.4,241.6 490.3,238.9 491.2,246.4 492.1,237.3 493.0,240.6 493.9,247.9 494.8,261.1 495.7,245.0 496.6,250.3 497.5,247.9 498.4,257.3 499.3,253.7 500.1,251.0 501.0,250.8 501.9,251.7 502.8,245.4 503.7,252.4 504.6,249.9 505.5,251.6 506.4,251.0 507.3,252.4 508.2,256.8 509.1,247.9 510.0,242.7 510.9,242.9 511.8,246.1 512.7,245.3 513.5,240.9 514.4,235.9 515.3,237.0 516.2,228.2 517.1,225.3 518.0,229.7 518.9,222.8 519.8,229.0 520.7,230.7 521.6,243.1 522.5,238.5 523.4,236.6 524.3,243.8 525.2,240.1 526.1,242.5 526.9,236.7 527.8,241.4 528.7,231.9 529.6,239.0 530.5,237.1 531.4,249.3 532.3,250.8 533.2,243.4 534.1,241.2 535.0,241.4 535.9,248.4 536.8,241.7 537.7,247.9 538.6,241.1 539.5,245.1 540.3,250.0 541.2,249.6 542.1,249.4 543.0,245.6 543.9,248.4 544.8,244.4 545.7,238.3 546.6,243.1 547.5,245.5 548.4,243.3 549.3,246.1 550.2,245.4 551.1,258.0 552.0,241.7 552.9,249.3 553.8,253.6 554.6,251.9 555.5,255.5 556.4,255.9 557.3,253.5 558.2,251.5 559.1,252.7 560.0,251.7 560.9,256.9 561.8,254.3 562.7,247.6 563.6,233.0 564.5,221.9 565.4,233.3 566.3,232.4 567.2,233.9 568.0,225.5 568.9,232.4 569.8,230.4 570.7,237.8 571.6,236.5 572.5,226.9 573.4,227.8 574.3,234.6 575.2,235.3 576.1,241.4 577.0,235.8 577.9,240.7 578.8,244.5 579.7,240.7 580.6,239.5 581.4,252.5 582.3,248.4 583.2,252.4 584.1,262.6 585.0,253.6 585.9,268.5 586.8,275.3 587.7,268.2 588.6,254.5 589.5,267.4 590.4,255.6 591.3,255.9 592.2,267.3 593.1,254.8 594.0,268.3 594.8,268.1 595.7,255.9 596.6,268.7 597.5,256.4 598.4,256.1 599.3,266.6 600.2,255.3 601.1,264.6 602.0,259.6 602.9,259.8 603.8,251.4 604.7,247.3 605.6,252.9 606.5,243.3 607.4,245.5 608.2,240.7 609.1,246.0 610.0,249.9 610.9,242.3 611.8,250.8 612.7,247.2 613.6,239.9 614.5,233.1 615.4,237.5 616.3,229.4 617.2,228.6 618.1,232.6 619.0,232.5 619.9,239.7 620.8,238.3 621.6,245.8 622.5,245.0 623.4,251.8 624.3,265.6 625.2,258.8 626.1,253.6 627.0,255.5 627.9,239.9 628.8,233.9 629.7,235.6 630.6,240.9 631.5,234.0 632.4,233.5 633.3,236.2 634.2,234.3 635.1,245.9 635.9,238.2 636.8,242.1 637.7,245.0 638.6,246.9 639.5,247.8 640.4,252.1 641.3,253.7 642.2,250.4 643.1,257.8 644.0,264.5 644.9,261.4 645.8,260.4" fill="none" stroke="#ececec" stroke-width="1.600" stroke-linejoin="round"/><polyline points="141.0,338.8 142.1,311.8 143.2,310.2 144.4,312.2 145.5,336.0 146.6,338.0 147.7,337.4 148.8,309.4 149.9,305.4 151.1,308.7 152.2,312.7 153.3,306.3 154.4,311.4 155.5,310.4 156.6,337.7 157.8,311.3 158.9,302.2 160.0,319.2 161.1,306.6 162.2,304.7 163.3,305.9 164.5,302.2 165.6,298.2 166.7,302.6 167.8,301.6 168.9,341.4 170.0,302.7 171.2,299.1 172.3,300.5 173.4,339.1 174.5,307.0 175.6,299.9 176.7,302.8 177.9,338.3 179.0,304.4 180.1,295.3 181.2,340.5 182.3,339.7 183.4,307.9 184.6,297.1 185.7,337.0 186.8,301.1 187.9,299.8 189.0,295.9 190.1,336.6 191.3,303.6 192.4,341.4 193.5,302.6 194.6,316.7 195.7,339.7 196.8,302.7 198.0,304.2 199.1,307.2 200.2,307.9 201.3,303.2 202.4,301.5 203.5,299.0 204.7,295.4 205.8,301.6 206.9,296.5 208.0,299.0 209.1,295.6 210.2,297.6 211.4,301.3 212.5,305.6 213.6,298.8 214.7,299.0 215.8,304.4 216.9,299.5 218.1,301.4 219.2,300.2 220.3,298.6 221.4,293.5 222.5,302.0 223.6,300.1 224.8,300.6 225.9,299.2 227.0,300.6 228.1,296.5 229.2,295.8 230.3,296.9 231.5,298.5 232.6,293.5 233.7,300.0 234.8,292.7 235.9,302.3 237.0,293.5 238.2,307.0 239.3,309.8 240.4,297.4 241.5,302.9 242.6,339.8 243.7,311.0 244.9,298.6 246.0,304.4 247.1,300.3 248.2,301.8 249.3,301.2 250.4,296.7 251.6,300.3 252.7,301.3 253.8,305.8 254.9,299.6 256.0,298.7 257.1,317.8 258.3,302.0 259.4,314.4 260.5,304.1 261.6,305.1 262.7,302.5 263.8,337.7 265.0,301.4 266.1,300.6 267.2,338.0 268.3,306.0 269.4,302.5 270.5,300.4 271.7,302.7 272.8,299.5 273.9,306.3 275.0,302.1 276.1,301.5 277.2,307.5 278.4,301.0 279.5,300.5 280.6,301.9 281.7,298.5 282.8,302.3 283.9,295.5 285.1,312.6 286.2,299.1 287.3,300.0 288.4,297.6 289.5,300.6 290.6,336.1 291.8,325.0 292.9,312.6 294.0,305.3 295.1,319.9 296.2,297.6 297.3,339.7 298.5,297.1 299.6,302.5 300.7,299.6 301.8,306.9 302.9,337.5 304.0,339.8 305.2,299.1 306.3,301.3 307.4,298.5 308.5,297.0 309.6,305.6 310.7,306.0 311.9,301.6 313.0,306.5 314.1,304.7 315.2,339.5 316.3,303.6 317.4,300.8 318.6,338.1 319.7,299.4 320.8,303.1 321.9,296.8 323.0,299.9 324.1,300.8 325.3,301.4 326.4,306.5 327.5,340.6 328.6,296.3 329.7,296.7 330.8,340.7 332.0,337.2 333.1,300.1 334.2,301.3 335.3,300.3 336.4,299.5 337.5,298.6 338.7,324.2 339.8,304.0 340.9,299.9 342.0,313.8 343.1,312.2 344.2,299.9 345.4,300.9 346.5,301.1 347.6,300.7 348.7,305.6 349.8,336.1 350.9,301.7 352.1,299.4 353.2,299.5 354.3,298.2 355.4,338.2 356.5,316.8 357.6,314.7 358.8,299.6 359.9,301.0 361.0,303.0 362.1,298.3 363.2,302.5 364.4,295.9 365.5,297.7 366.6,309.4 367.7,307.2 368.8,303.4 369.9,301.1 371.1,320.3 372.2,298.6 373.3,303.5 374.4,315.2 375.5,295.9 376.6,336.5 377.8,297.0 378.9,299.5 380.0,301.2 381.1,304.4 382.2,302.7 383.3,297.8 384.5,341.4 385.6,318.3 386.7,303.7 387.8,302.0 388.9,305.1 390.0,309.5 391.2,322.9 392.3,298.0 393.4,305.8 394.5,298.0 395.6,316.8 396.7,300.2 397.9,303.1 399.0,311.7 400.1,296.5 401.2,298.8 402.3,299.7 403.4,299.4 404.6,298.5 405.7,295.3 406.8,295.6 407.9,299.5 409.0,298.9 410.1,298.1 411.3,314.5 412.4,300.9 413.5,341.3 414.6,297.7 415.7,298.3 416.8,298.3 418.0,336.6 419.1,296.6 420.2,312.9 421.3,301.1 422.4,338.0 423.5,298.2 424.7,301.4 425.8,302.5 426.9,302.4 428.0,299.6 429.1,301.5 430.2,304.9 431.4,341.3 432.5,298.6 433.6,337.2 434.7,302.3 435.8,304.4 436.9,299.2 438.1,302.5 439.2,305.0 440.3,321.6 441.4,305.7 442.5,340.4 443.6,304.2 444.8,300.9 445.9,296.8 447.0,300.9 448.1,318.3 449.2,299.3 450.3,304.9 451.5,300.1 452.6,299.3 453.7,300.9 454.8,301.8 455.9,304.7 457.0,295.1 458.2,299.2 459.3,339.3 460.4,340.7 461.5,305.2 462.6,301.7 463.7,306.4 464.9,300.6 466.0,303.8 467.1,298.7 468.2,303.0 469.3,297.6 470.4,300.6 471.6,306.6 472.7,337.9 473.8,297.3 474.9,298.8 476.0,299.2 477.1,339.6 478.3,302.6 479.4,336.3 480.5,298.4 481.6,303.8 482.7,301.4 483.8,335.8 485.0,323.9 486.1,304.1 487.2,303.3 488.3,305.0 489.4,302.2 490.5,302.0 491.7,304.9 492.8,299.0 493.9,313.3 495.0,303.0 496.1,297.8 497.2,321.5 498.4,299.5 499.5,300.3 500.6,302.9 501.7,309.8 502.8,304.2 503.9,298.1 505.1,297.9 506.2,297.4 507.3,302.1 508.4,316.0 509.5,304.1 510.6,336.5 511.8,298.6 512.9,337.1 514.0,300.5 515.1,320.9 516.2,300.3 517.3,307.1 518.5,319.3 519.6,303.0 520.7,301.6 521.8,306.8 522.9,292.0 524.0,321.5 525.2,295.9 526.3,303.5 527.4,317.2 528.5,293.8 529.6,306.1 530.7,306.9 531.9,298.1 533.0,317.5 534.1,298.2 535.2,302.8 536.3,302.5 537.4,299.2 538.6,304.8 539.7,337.0 540.8,298.5 541.9,302.6 543.0,300.4 544.1,304.1 545.3,297.7 546.4,301.0 547.5,303.5 548.6,295.4 549.7,299.3 550.8,300.3 552.0,297.8 553.1,296.9 554.2,337.7 555.3,322.4 556.4,299.6 557.5,337.3 558.7,299.4 559.8,300.8 560.9,341.3 562.0,295.4 563.1,304.6 564.2,308.1 565.4,315.9 566.5,309.7 567.6,339.5 568.7,301.7 569.8,299.8 570.9,306.6 572.1,302.1 573.2,317.2 574.3,296.6 575.4,297.8 576.5,307.1 577.6,301.8 578.8,301.1 579.9,338.7 581.0,300.8 582.1,299.2 583.2,298.7 584.3,313.6 585.5,315.6 586.6,321.2 587.7,341.4 588.8,340.0 589.9,340.5 591.1,339.7 592.2,340.7 593.3,340.6 594.4,336.5 595.5,339.8 596.6,339.0 597.8,337.4 598.9,341.2 600.0,327.8 601.1,315.2 602.2,339.3 603.3,340.8 604.5,304.0 605.6,311.7 606.7,314.1 607.8,301.8 608.9,304.4 610.0,339.1 611.2,298.8 612.3,322.7 613.4,336.3 614.5,297.0 615.6,296.9 616.7,314.9 617.9,302.2 619.0,297.4 620.1,339.4 621.2,336.6 622.3,337.2 623.4,290.6 624.6,300.4 625.7,339.2 626.8,298.9 627.9,299.1 629.0,296.9 630.1,297.2 631.3,293.3 632.4,339.5 633.5,312.9 634.6,290.8 635.7,297.1 636.8,337.3 638.0,296.6 639.1,336.3 640.2,307.9 641.3,306.9 642.4,309.8 643.5,323.7 644.7,332.7 645.8,341.4" fill="none" stroke="#dedede" stroke-width="1.450" stroke-linejoin="round"/><path d="M136.800 210.1 H140.600 M136.800 195.2 H140.600 M136.800 180.2 H140.600 M136.800 165.3 H140.600 M136.800 150.3 H140.600 M136.800 135.4 H140.600 M136.800 120.5 H140.600 M136.800 105.5 H140.600 M136.800 90.6 H140.600 M136.800 275.7 H140.600 M136.800 256.0 H140.600 M136.800 236.3 H140.600 M136.800 216.6 H140.600 M136.800 341.8 H140.600 M136.800 330.1 H140.600 M136.800 318.4 H140.600 M136.800 306.8 H140.600 M136.800 295.1 H140.600 M136.800 283.4 H140.600 M141.0 362.600 V365.700 M185.7 362.600 V365.700 M230.3 362.600 V365.700 M275.0 362.600 V365.700 M319.7 362.600 V365.700 M364.4 362.600 V365.700 M409.0 362.600 V365.700 M453.7 362.600 V365.700 M498.4 362.600 V365.700 M543.0 362.600 V365.700 M587.7 362.600 V365.700 M632.4 362.600 V365.700 M677.0 362.600 V365.700" stroke="#7a7a7a" stroke-width=".9" fill="none"/></svg>
<span class="t" style="left:131.24px;top:206.08px;font-size:8.2px;color:#444;">0</span>
<span class="t" style="left:122.13px;top:191.14px;font-size:8.2px;color:#444;">100</span>
<span class="t" style="left:122.13px;top:176.20px;font-size:8.2px;color:#444;">200</span>
<span class="t" style="left:122.13px;top:161.26px;font-size:8.2px;color:#444;">300</span>
<span class="t" style="left:122.13px;top:146.32px;font-size:8.2px;color:#444;">400</span>
<span class="t" style="left:122.13px;top:131.38px;font-size:8.2px;color:#444;">500</span>
<span class="t" style="left:122.13px;top:116.44px;font-size:8.2px;color:#444;">600</span>
<span class="t" style="left:122.13px;top:101.50px;font-size:8.2px;color:#444;">700</span>
<span class="t" style="left:122.13px;top:86.56px;font-size:8.2px;color:#444;">800</span>
<span class="t" style="left:131.24px;top:271.68px;font-size:8.2px;color:#444;">0</span>
<span class="t" style="left:126.69px;top:251.98px;font-size:8.2px;color:#444;">20</span>
<span class="t" style="left:126.69px;top:232.28px;font-size:8.2px;color:#444;">40</span>
<span class="t" style="left:126.69px;top:212.58px;font-size:8.2px;color:#444;">60</span>
<span class="t" style="left:131.24px;top:337.78px;font-size:8.2px;color:#444;">0</span>
<span class="t" style="left:126.69px;top:326.10px;font-size:8.2px;color:#444;">25</span>
<span class="t" style="left:126.69px;top:314.42px;font-size:8.2px;color:#444;">50</span>
<span class="t" style="left:126.69px;top:302.74px;font-size:8.2px;color:#444;">75</span>
<span class="t" style="left:122.13px;top:291.06px;font-size:8.2px;color:#444;">100</span>
<span class="t" style="left:122.13px;top:279.38px;font-size:8.2px;color:#444;">125</span>
<span class="t" style="left:90.90px;top:145.50px;font-size:9.6px;color:#333;width:43.00px;transform:rotate(-90deg);transform-origin:50% 49%;letter-spacing:-0.257px;">Power (W)</span>
<span class="t" style="left:87.80px;top:241.10px;font-size:9.6px;color:#333;width:58.00px;transform:rotate(-90deg);transform-origin:50% 49%;letter-spacing:0.034px;">Speed (km/h)</span>
<span class="t" style="left:80.40px;top:307.30px;font-size:9.6px;color:#333;width:64.00px;transform:rotate(-90deg);transform-origin:50% 49%;clip-path:inset(-2px 2.4px -2px 2.0px);">Cadence (rpm)</span>
<span class="t" style="left:143.30px;top:91.08px;font-size:8.2px;color:#ffffff;font-weight:bold;letter-spacing:-0.450px;">Newton</span>
<span class="t" style="left:173.30px;top:91.08px;font-size:8.2px;color:#5fe838;font-weight:bold;letter-spacing:-0.413px;">Newton DFPM</span>
<span class="t" style="left:130.40px;top:367.58px;font-size:8.2px;color:#4a4a4a;letter-spacing:0.140px;">00:00</span>
<span class="t" style="left:175.07px;top:367.58px;font-size:8.2px;color:#4a4a4a;letter-spacing:0.140px;">00:10</span>
<span class="t" style="left:219.74px;top:367.58px;font-size:8.2px;color:#4a4a4a;letter-spacing:0.140px;">00:20</span>
<span class="t" style="left:264.41px;top:367.58px;font-size:8.2px;color:#4a4a4a;letter-spacing:0.140px;">00:30</span>
<span class="t" style="left:309.08px;top:367.58px;font-size:8.2px;color:#4a4a4a;letter-spacing:0.140px;">00:40</span>
<span class="t" style="left:353.75px;top:367.58px;font-size:8.2px;color:#4a4a4a;letter-spacing:0.140px;">00:50</span>
<span class="t" style="left:398.42px;top:367.58px;font-size:8.2px;color:#4a4a4a;letter-spacing:0.140px;">01:00</span>
<span class="t" style="left:443.09px;top:367.58px;font-size:8.2px;color:#4a4a4a;letter-spacing:0.140px;">01:10</span>
<span class="t" style="left:487.76px;top:367.58px;font-size:8.2px;color:#4a4a4a;letter-spacing:0.140px;">01:20</span>
<span class="t" style="left:532.43px;top:367.58px;font-size:8.2px;color:#4a4a4a;letter-spacing:0.140px;">01:30</span>
<span class="t" style="left:577.10px;top:367.58px;font-size:8.2px;color:#4a4a4a;letter-spacing:0.140px;">01:40</span>
<span class="t" style="left:621.77px;top:367.58px;font-size:8.2px;color:#4a4a4a;letter-spacing:0.140px;">01:50</span>
<span class="t" style="left:666.44px;top:367.58px;font-size:8.2px;color:#4a4a4a;letter-spacing:0.140px;">02:00</span>
<span class="t" style="left:398.60px;top:377.29px;font-size:9.4px;color:#2a2a2a;letter-spacing:0.229px;">Time</span>
<div class="a" style="left:682.60px;top:82.60px;width:11.30px;height:264.20px;background:linear-gradient(90deg,#d4d4d4 0,#b6b6b6 25%,#b2b2b2 100%);border:1px solid #8a8a8a;border-right-color:#5e5e5e"></div>
<div class="a" style="left:682.60px;top:82.60px;width:11.30px;height:11.20px;background:#c8c8c8;border:1px solid #7e7e7e;border-right-color:#5e5e5e"></div>
<div class="a" style="left:682.60px;top:335.60px;width:11.30px;height:11.20px;background:#c8c8c8;border:1px solid #7e7e7e;border-right-color:#5e5e5e"></div>
<svg width="994" height="560"><path d="M686 90.4 L688.250 86.000 L690.500 90.4z M686 339.400 L688.250 343.600 L690.500 339.400z" fill="#111"/></svg>
<div class="a" style="left:109.00px;top:348.40px;width:572.60px;height:11.00px;background:linear-gradient(180deg,#bdbdbd 0,#ababab 30%,#a8a8a8 100%);border:1px solid #7c7c7c"></div>
<div class="a" style="left:109.00px;top:348.40px;width:11.60px;height:11.00px;border:1px solid #787878;background:#a8a8a8"></div>
<div class="a" style="left:670.40px;top:348.40px;width:11.20px;height:11.00px;border:1px solid #787878;background:#a8a8a8"></div>
<div class="btn" style="left:86.40px;top:417.00px;width:74.30px;height:15.40px"></div>
<span class="t" style="left:111.55px;top:420.89px;font-size:9px;color:#262626;letter-spacing:0.081px;">Add...</span>
<div class="btn" style="left:86.40px;top:442.00px;width:74.30px;height:15.50px"></div>
<span class="t" style="left:103.55px;top:445.94px;font-size:9px;color:#262626;letter-spacing:-0.113px;">Remove...</span>
<span class="t" style="left:171.20px;top:405.59px;font-size:9px;color:#2a2a2a;letter-spacing:-0.065px;">Ride Files (select to plot)</span>
<div class="a" style="left:169.70px;top:417.00px;width:115.60px;height:48.80px;background:#fff;border:1px solid #b4b4b4"></div>
<div class="a" style="left:273.50px;top:418.00px;width:10.80px;height:46.80px;background:#fafafa;border-left:1px solid #e4e4e4"></div>
<div class="a" style="left:170.70px;top:418.00px;width:102.80px;height:11.40px;background:#2446cc"></div>
<span class="t" style="left:174.60px;top:419.49px;font-size:9px;color:#fff;font-weight:bold;letter-spacing:-0.450px;">Newton DFPM</span>
<span class="t" style="left:172.00px;top:471.69px;font-size:9px;color:#2a2a2a;letter-spacing:0.080px;">(Ctrl-click to select multiple;</span>
<span class="t" style="left:172.00px;top:482.19px;font-size:9px;color:#2a2a2a;">Single-click to rename.)</span>
<span class="t" style="left:316.30px;top:419.89px;font-size:9px;color:#2a2a2a;letter-spacing:0.021px;">Top Plot</span>
<span class="t" style="left:304.50px;top:442.29px;font-size:9px;color:#2a2a2a;">Middle Plot</span>
<span class="t" style="left:303.50px;top:464.49px;font-size:9px;color:#2a2a2a;letter-spacing:-0.094px;">Bottom Plot</span>
<div class="sel" style="left:353.00px;top:417.20px;width:66.20px;height:14.10px"><i style="width:12.60px"></i></div>
<svg width="994" height="560"><path d="M410.90 422.75 L413.20 420.55 L415.50 422.75 M410.90 425.75 L413.20 427.95 L415.50 425.75" fill="none" stroke="#fff" stroke-width="1.2" stroke-linecap="round" stroke-linejoin="round"/></svg>
<span class="t" style="left:356.60px;top:420.34px;font-size:9px;color:#262626;letter-spacing:-0.203px;">Power</span>
<div class="sel" style="left:353.00px;top:439.40px;width:66.20px;height:14.10px"><i style="width:12.60px"></i></div>
<svg width="994" height="560"><path d="M410.90 444.95 L413.20 442.75 L415.50 444.95 M410.90 447.95 L413.20 450.15 L415.50 447.95" fill="none" stroke="#fff" stroke-width="1.2" stroke-linecap="round" stroke-linejoin="round"/></svg>
<span class="t" style="left:356.60px;top:442.04px;font-size:9px;color:#262626;letter-spacing:-0.306px;">Speed</span>
<div class="sel" style="left:353.00px;top:461.90px;width:66.20px;height:14.10px"><i style="width:12.60px"></i></div>
<svg width="994" height="560"><path d="M410.90 467.45 L413.20 465.25 L415.50 467.45 M410.90 470.45 L413.20 472.65 L415.50 470.45" fill="none" stroke="#fff" stroke-width="1.2" stroke-linecap="round" stroke-linejoin="round"/></svg>
<span class="t" style="left:356.60px;top:464.24px;font-size:9px;color:#262626;letter-spacing:-0.362px;">Cadence</span>
<span class="t" style="left:440.70px;top:419.89px;font-size:9px;color:#2a2a2a;letter-spacing:-0.042px;">Equation of Motion</span>
<div class="sel" style="left:519.40px;top:417.20px;width:103.80px;height:14.10px"><i style="width:12.60px"></i></div>
<svg width="994" height="560"><path d="M614.90 422.75 L617.20 420.55 L619.50 422.75 M614.90 425.75 L617.20 427.95 L619.50 425.75" fill="none" stroke="#fff" stroke-width="1.2" stroke-linecap="round" stroke-linejoin="round"/></svg>
<span class="t" style="left:523.00px;top:420.34px;font-size:9px;color:#262626;letter-spacing:-0.115px;">Off</span>
<div class="btn" style="left:660.30px;top:459.00px;width:52.00px;height:15.80px"></div>
<span class="t" style="left:675.05px;top:463.09px;font-size:9px;color:#262626;letter-spacing:-0.103px;">Close</span>
<svg width="994" height="560"><path d="M719.600 497.400 L726.800 490.200 M722.400 497.400 L726.800 493 M725 497.400 L726.800 495.600" stroke="#a2a2a2" stroke-width=".7"/></svg>
</body></html>
